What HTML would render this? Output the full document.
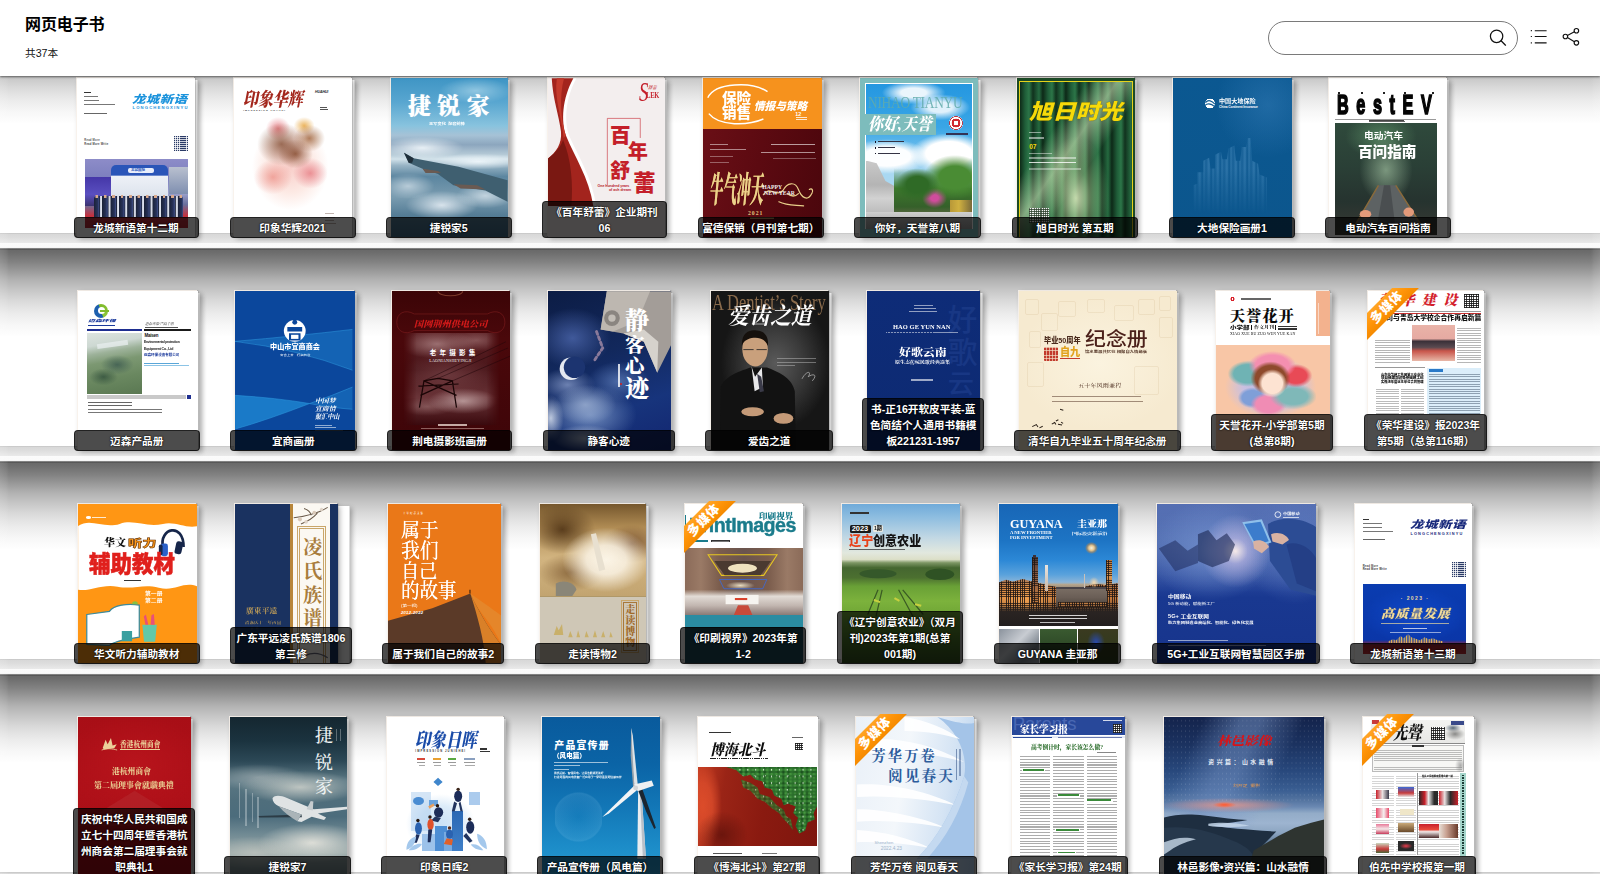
<!DOCTYPE html>
<html lang="zh-CN"><head><meta charset="utf-8"><title>网页电子书</title>
<style>
*{box-sizing:border-box;margin:0;padding:0}
html,body{width:1600px;height:874px;overflow:hidden;background:#fff}
body{position:relative;font-family:"Liberation Sans","Noto Sans CJK SC",sans-serif;}
#shelf{position:absolute;left:0;top:0;width:1600px;height:874px;
 background-image:
  linear-gradient(to right,rgba(255,255,255,.14) 0,rgba(255,255,255,.07) 6px,rgba(255,255,255,0) 9px,rgba(255,255,255,0) 1591px,rgba(255,255,255,.07) 1594px,rgba(255,255,255,.14) 1600px),
  linear-gradient(to bottom,
   #4a4a4a 0,#6a6a6a 1.2px,#6e6e6e 4px,#828282 13px,#9a9a9a 22px,#b2b2b2 31px,#c6c6c6 41px,#dadada 52px,#ebebeb 64px,#f7f7f7 76px,#ffffff 88px,
   #ffffff 196.6px,#c9c9c9 197.4px,#d8d8d8 198.4px,#dedede 202px,#e9e9e9 206.6px,#fbfbfb 207.4px,#fafafa 211px,#f2f2f2 212px,#555 212.7px,#4a4a4a 213px);
 background-size:1600px 874px,1600px 213px;background-position:0 0,0 36px;background-repeat:no-repeat,repeat-y}
#hdr{position:absolute;left:0;top:0;width:1600px;height:75.5px;background:#fff;box-shadow:0 1px 2px rgba(0,0,0,.55);z-index:5}
#hdr h1{position:absolute;left:25px;top:15px;font-size:16px;line-height:20px;font-weight:700;color:#000;letter-spacing:-.1px}
#hdr .cnt{position:absolute;left:25px;top:46px;font-size:10.67px;line-height:14px;color:#111}
#srch{position:absolute;left:1267.5px;top:20.9px;width:250.3px;height:34.2px;border:1px solid #7a7a7a;border-radius:17.1px;background:#fff}
.ic{position:absolute}
.bk{position:absolute;height:159.8px}
.cv{position:absolute;left:0;top:0;height:159px;overflow:hidden;box-shadow:-1px -1px 0 0 rgba(255,248,240,.8),0 0 0 .5px rgba(0,0,0,.18),2px 2px 5px rgba(0,0,0,.28)}
.pg{position:absolute;top:1.5px;height:157.8px;background:linear-gradient(to right,#b8b8b8 0,#fff 1px,#fff calc(100% - 1px),#bbb 100%);box-shadow:2px 2px 5px rgba(0,0,0,.3)}
.lb{position:absolute;bottom:0;background:rgba(0,0,0,.7);border:1px solid rgba(0,0,0,.55);border-radius:4px;color:#fff;font-weight:700;font-size:10.67px;line-height:16px;padding:1.9px 0 .9px;white-space:nowrap;text-align:center;text-shadow:0 0 2px #000,0 0 1px #000;z-index:3;word-break:break-all;overflow:hidden}
.rbw{position:absolute;left:-1.3px;top:-2.8px;width:54px;height:54px;overflow:hidden;z-index:2}
.rb{position:absolute;left:-25.3px;top:10.2px;width:90px;height:18.9px;background:linear-gradient(#ffa526,#ff9408 55%,#f58a00);transform:rotate(-45deg);color:#fff;font-size:12.8px;line-height:19.4px;text-align:center;font-weight:900;font-family:"Liberation Sans","Noto Sans CJK SC",sans-serif;letter-spacing:.4px;text-indent:1px}
.a{position:absolute}
.t{position:absolute;white-space:nowrap;line-height:1}
.sf{font-family:"Liberation Serif","Noto Serif CJK SC",serif}
</style></head>
<body>
<div id="shelf"></div>
<div id="hdr"><h1>网页电子书</h1><div class="cnt">共37本</div>
<div id="srch"><svg class="ic" style="left:218.2px;top:5.3px" width="22" height="22" viewBox="0 0 22 22" fill="none" stroke="#111" stroke-width="1.25" stroke-linecap="round"><circle cx="9.6" cy="9.3" r="6.2"/><path d="M14.1 13.8 L18.5 18.2"/></svg></div>
<svg class="ic" style="left:1528px;top:26px" width="22" height="22" viewBox="0 0 22 22" fill="none" stroke="#111" stroke-width="1.15" stroke-linecap="butt"><path d="M6.8 4.7H18.6M6.8 10.5H18.6M6.8 16.8H18.6"/><path d="M2.8 4.7h1.1M2.8 10.5h1.1M2.8 16.8h1.1" stroke-width="1.2"/></svg>
<svg class="ic" style="left:1560px;top:25px" width="22" height="24" viewBox="0 0 22 24" fill="none" stroke="#111" stroke-width="1.15"><circle cx="16.4" cy="5.7" r="2.25"/><circle cx="5.4" cy="11.5" r="2.25"/><circle cx="16.4" cy="17.8" r="2.25"/><path d="M7.4 10.4 L14.4 6.8M7.4 12.6 L14.4 16.7"/></svg>
</div>
<div class="bk" style="left:77px;top:78px;width:121px"><div class="pg" style="left:117px;width:4px"></div><div class="cv" style="width:118px;background:#fff"><div class="a" style="left:7.3px;top:14.03px;width:6.59px;height:1.45px;background:#333;"></div><div class="a" style="left:7.3px;top:18.36px;width:13.8px;height:0.82px;background:#777;"></div><div class="a" style="left:7.3px;top:22.48px;width:14.41px;height:0.82px;background:#777;"></div><div class="a" style="left:7.3px;top:26.39px;width:30.27px;height:0.82px;background:#777;"></div><div class="a" style="left:7.3px;top:34.83px;width:22.65px;height:1.03px;background:#666;"></div><div class="t " style="left:55.08px;top:15.89px;font-size:10.95px;color:#1b93dc;transform-origin:0 0;transform:scaleX(1.232);font-weight:900;font-style:italic;letter-spacing:.3px">龙城新语</div><div class="t " style="left:55.49px;top:27.57px;font-size:4.19px;color:#1b93dc;font-weight:700;letter-spacing:1.15px">LONGCHENGXINYU</div><div class="a" style="left:96.88px;top:58.31px;width:14.21px;height:14.41px;background:#2a3a66;background-image:repeating-linear-gradient(0deg,rgba(255,255,255,.0) 0,rgba(255,255,255,0) 1.2px,rgba(255,255,255,.75) 1.2px,rgba(255,255,255,.75) 2px),repeating-linear-gradient(90deg,rgba(255,255,255,0) 0,rgba(255,255,255,0) 1.3px,rgba(255,255,255,.8) 1.3px,rgba(255,255,255,.8) 2.1px);"></div><div class="t " style="left:7.3px;top:61.79px;font-size:2.7px;color:#555;font-weight:700;letter-spacing:.2px">Read More</div><div class="t " style="left:7.3px;top:65.5px;font-size:2.68px;color:#444;font-weight:700;letter-spacing:.2px">Read More Write</div><div class="a" style="left:7.71px;top:80.55px;width:103.38px;height:68.99px;background:linear-gradient(to bottom,#8d8cc8 0,#7c7fbe 28%,#9aa0cc 50%,#6a6f9c 66%,#c23240 82%,#b82a36 100%);"></div><div class="a" style="left:7.71px;top:99.08px;width:26.77px;height:28.83px;background:linear-gradient(to bottom,#4537a8,#5a4fc0 60%,#3b3370);"></div><div class="a" style="left:92.14px;top:88.79px;width:18.95px;height:26.77px;background:linear-gradient(to bottom,#b9c0cf,#7f8fb0);"></div><div class="a" style="left:34.48px;top:87.14px;width:56.63px;height:46.95px;background:linear-gradient(to bottom,#2a55b8 0,#2a55b8 22%,#eef1f7 23%,#dfe5ee 60%,#b9c3d6 100%);border-radius:5px 5px 0 0"></div><div class="a" style="left:50.96px;top:90.43px;width:25.74px;height:4.54px;background:#e9eefb;border-radius:2px"></div><div class="t " style="left:54.05px;top:91.05px;font-size:3.51px;color:#2a55b8;font-weight:700">龙城国际</div><div class="a" style="left:16.98px;top:118.03px;width:89.17px;height:20.59px;background:repeating-linear-gradient(90deg,#1b2238 0,#27325a 3.6px,#3c4a80 4.8px,#1b2238 5.8px,#c9cede 6.4px,#dfe3ee 7.8px,#1b2238 8.4px);border-radius:3px 3px 0 0"></div><div class="a" style="left:16.98px;top:116.79px;width:89.17px;height:3.3px;background:repeating-linear-gradient(90deg,rgba(0,0,0,0) 0,rgba(0,0,0,0) 1.4px,#d9a98c 1.6px,#d9a98c 4px,rgba(0,0,0,0) 4.2px,rgba(0,0,0,0) 8.4px);"></div></div><div class="lb" style="left:-3.5px;width:125.0px">龙城新语第十二期</div></div>
<div class="bk" style="left:234px;top:78px;width:121px"><div class="pg" style="left:117px;width:4px"></div><div class="cv" style="width:118px;background:#fff"><div class="t sf" style="left:8.87px;top:11.94px;font-size:19.06px;color:#a3261c;transform-origin:0 0;transform:scaleX(0.783);font-weight:900;font-style:italic">印象华辉</div><div class="t " style="left:9.28px;top:31.78px;font-size:2.38px;color:#333;font-weight:700;letter-spacing:1.05px">IMPRESSION HUAHUI</div><div class="t " style="left:80.94px;top:12.64px;font-size:3.58px;color:#1a1a2a;font-weight:700;font-style:italic;letter-spacing:-.1px">HUAHUI</div><div class="a" style="left:85.88px;top:28.66px;width:7.42px;height:1.03px;background:#555;"></div><div class="a" style="left:85.88px;top:30.71px;width:7.83px;height:1.03px;background:#555;"></div><div class="a" style="left:11.34px;top:39.36px;width:86.49px;height:96.79px;background:radial-gradient(ellipse 28% 22% at 42% 28%,rgba(120,62,34,0.74),rgba(120,62,34,0) 100%),radial-gradient(ellipse 20% 15% at 58% 38%,rgba(130,70,40,0.78),rgba(130,70,40,0) 100%),radial-gradient(ellipse 18% 14% at 74% 22%,rgba(150,84,40,0.74),rgba(150,84,40,0) 100%),radial-gradient(ellipse 12% 9% at 68% 9%,rgba(230,160,50,0.78),rgba(230,160,50,0) 100%),radial-gradient(ellipse 14% 12% at 38% 12%,rgba(225,90,100,0.70),rgba(225,90,100,0) 100%),radial-gradient(ellipse 20% 16% at 75% 58%,rgba(225,95,105,0.64),rgba(225,95,105,0) 100%),radial-gradient(ellipse 22% 18% at 32% 62%,rgba(232,120,110,0.60),rgba(232,120,110,0) 100%),radial-gradient(ellipse 44% 44% at 52% 52%,rgba(247,196,190,0.83),rgba(250,215,205,0.52) 60%,rgba(255,255,255,0) 100%);"></div><div class="a" style="left:90.62px;top:135.12px;width:9.27px;height:1.24px;background:rgba(120,90,80,.45);"></div><div class="a" style="left:90.62px;top:138.62px;width:10.3px;height:1.24px;background:rgba(120,90,80,.45);"></div><div class="a" style="left:90.62px;top:141.92px;width:9.27px;height:1.23px;background:rgba(120,90,80,.45);"></div><div class="a" style="left:90.62px;top:144.8px;width:11.33px;height:1.24px;background:rgba(120,90,80,.45);"></div></div><div class="lb" style="left:-4.5px;width:126.0px">印象华辉2021</div></div>
<div class="bk" style="left:391px;top:78px;width:119px"><div class="pg" style="left:116px;width:3px"></div><div class="cv" style="width:117px;background:#5fa3c4"><div class="a" style="left:-0.41px;top:0.24px;width:121.5px;height:158.98px;background:radial-gradient(ellipse 34% 7% at 26% 44%,rgba(240,246,250,.9),rgba(240,246,250,0) 100%),radial-gradient(ellipse 40% 5% at 72% 52.5%,rgba(238,246,250,.95),rgba(238,246,250,0) 100%),radial-gradient(ellipse 30% 9% at 42% 80%,rgba(235,242,248,.85),rgba(235,242,248,0) 100%),radial-gradient(ellipse 24% 8% at 78% 74%,rgba(225,235,242,.7),rgba(225,235,242,0) 100%),radial-gradient(ellipse 22% 8% at 14% 68%,rgba(225,235,242,.65),rgba(225,235,242,0) 100%),radial-gradient(ellipse 30% 8% at 70% 8%,rgba(190,225,240,.6),rgba(190,225,240,0) 100%),linear-gradient(to bottom,#3f95c4 0,#58a6d0 15%,#88c3de 30%,#a6c2d6 36%,#8ca6be 42%,#b4c9d6 48%,#d2e2ea 51%,#98b4c5 55%,#5c86a0 62%,#7a9cb0 75%,#557d96 86%,#3f6a86 100%);"></div><svg class="a" style="left:0;top:0;overflow:visible;" width="170" height="160" viewBox="102.0 38.8 825.5 777.0"><path d="M165 402 L212 428 L430 470 L668 535 L668 640 L560 585 L470 570 L405 560 L330 505 L255 480 L190 452 Z" fill="#3f5f70"/><path d="M165 402 L212 428 L205 450 L188 452 Z" fill="#1f2f3a"/><path d="M255 480 L330 490 L345 500 L270 500Z M405 555 L520 560 L560 580 L440 575Z" fill="#6a5a52"/></svg><div class="t sf" style="left:17.1px;top:17.58px;font-size:22.79px;color:#fff;font-weight:900;letter-spacing:6.5px;text-shadow:0 0 1px rgba(255,255,255,.6)">捷锐家</div><div class="t " style="left:38.31px;top:44.72px;font-size:3.5px;color:#fff;transform-origin:0 0;transform:scaleX(1.203);font-weight:700">王军变化&nbsp;&nbsp;配套前锋</div></div><div class="lb" style="left:-5px;width:125.5px">捷锐家5</div></div>
<div class="bk" style="left:547.5px;top:78px;width:119.0px"><div class="pg" style="left:116.0px;width:3px"></div><div class="cv" style="width:117.0px;background:#f3eeee"><svg class="a" style="left:0;top:0;overflow:visible;" width="170" height="160" viewBox="861.9 38.8 825.5 777.0"><path d="M880 40 L1000 40 C945 140 940 250 965 320 C1010 420 1075 520 1096 660 L862 660 L862 430 C900 400 930 360 925 300 C915 220 885 140 880 40 Z" fill="#fff"/><path d="M880 40 L985 40 C930 140 925 250 950 320 C990 420 1060 520 1082 660 L862 660 L862 430 C900 400 930 360 925 300 C915 220 885 140 880 40 Z" fill="#a3241d"/><path d="M862 430 C900 400 925 370 935 340 C975 430 985 560 975 660 L862 660Z" fill="#7a1812"/><path d="M905 40 C890 130 930 240 938 330 L948 318 C925 240 915 130 940 40Z" fill="#c43a2c"/><path d="M1150 560 L1150 235 L1310 235 L1310 330" fill="none" stroke="#c8303a" stroke-width="3"/></svg><div class="t " style="left:62.41px;top:48.01px;font-size:20.6px;color:#c41f2a;font-weight:900">百</div><div class="t " style="left:80.33px;top:64.08px;font-size:20.15px;color:#c41f2a;font-weight:900">年</div><div class="t " style="left:62.41px;top:82.61px;font-size:20.16px;color:#c41f2a;font-weight:900">舒</div><div class="t " style="left:85.68px;top:94.97px;font-size:22.34px;color:#c41f2a;font-weight:900">蕾</div><div class="t " style="left:50.05px;top:107.37px;font-size:3.58px;color:#b8202a;font-weight:700;letter-spacing:-.05px">One hundred years</div><div class="t " style="left:61.38px;top:111.28px;font-size:3.58px;color:#b8202a;font-weight:700">of ash dream</div><div class="t sf" style="left:91.86px;top:0.8px;font-size:26.62px;color:#c41f2a;font-style:italic;transform-origin:0 0;transform:scaleX(.7)">S</div><div class="t sf" style="left:98.86px;top:12.7px;font-size:8.55px;color:#c41f2a;font-weight:700;letter-spacing:-.2px;transform-origin:0 0;transform:scaleX(.75)">LEK</div><div class="t sf" style="left:100.51px;top:8.15px;font-size:4.38px;color:#c41f2a;font-weight:700;font-style:italic">舒蕾</div></div><div class="lb" style="left:-5.5px;width:125px">《百年舒蕾》企业期刊<br>06</div></div>
<div class="bk" style="left:703px;top:78px;width:120.5px"><div class="pg" style="left:117.5px;width:3px"></div><div class="cv" style="width:118.5px;background:#5c0a10"><div class="a" style="left:-2.41px;top:-1.82px;width:123.56px;height:52.72px;background:#f6921d;"></div><div class="a" style="left:-2.41px;top:50.9px;width:123.56px;height:107.9px;background:linear-gradient(100deg,#6a0f16 0,#5c0a11 45%,#4a060c 100%);"></div><svg class="a" style="left:0;top:0;overflow:visible;" width="170" height="160" viewBox="111.7 38.8 825.5 777.0"><path d="M135 135 C170 60 350 55 425 105" fill="none" stroke="#fff" stroke-width="7"/><path d="M140 212 C190 275 330 270 405 238" fill="none" stroke="#fff" stroke-width="7"/><path d="M405 605 C430 560 470 620 500 585 C520 545 560 540 575 580 C590 620 620 640 640 600 C650 585 640 570 628 580 M480 640 C520 660 560 655 600 660 M520 600 C540 615 560 615 575 600" fill="none" stroke="#e8cf8a" stroke-width="6" stroke-linecap="round"/></svg><div class="t " style="left:19.22px;top:13.0px;font-size:14.02px;color:#fff;transform-origin:0 0;transform:scaleX(1.043);font-weight:900">保险</div><div class="t " style="left:19.22px;top:27.83px;font-size:14.46px;color:#fff;transform-origin:0 0;transform:scaleX(1.011);font-weight:900">销售</div><div class="t " style="left:51.14px;top:22.89px;font-size:10.96px;color:#fff;transform-origin:0 0;transform:scaleX(0.97);font-weight:900;font-style:italic">情报与策略</div><div class="t " style="left:92.32px;top:33.56px;font-size:5.38px;color:#fff;font-weight:700">12</div><div class="a" style="left:92.73px;top:39.36px;width:10.92px;height:1.03px;background:rgba(255,255,255,.8);"></div><div class="a" style="left:92.73px;top:41.42px;width:11.54px;height:1.03px;background:rgba(255,255,255,.8);"></div><div class="a" style="left:6.86px;top:65.72px;width:18.53px;height:1.24px;background:rgba(255,255,255,.5);"></div><div class="a" style="left:6.86px;top:70.67px;width:36.04px;height:1.23px;background:rgba(255,255,255,.5);"></div><div class="a" style="left:6.86px;top:78.08px;width:23.27px;height:1.03px;background:rgba(255,255,255,.35);"></div><div class="a" style="left:6.86px;top:84.26px;width:19.15px;height:1.03px;background:rgba(255,255,255,.35);"></div><div class="a" style="left:67.61px;top:65.52px;width:44.89px;height:1.44px;background:rgba(255,255,255,.6);"></div><div class="a" style="left:57.72px;top:73.75px;width:54.78px;height:1.45px;background:rgba(255,255,255,.55);"></div><div class="a" style="left:70.08px;top:79.93px;width:42.83px;height:1.24px;background:rgba(255,255,255,.3);"></div><div class="t sf" style="left:5.83px;top:95.26px;font-size:35.49px;color:#ecd18c;transform-origin:0 0;transform:scaleX(0.38);font-weight:900;font-style:italic;text-shadow:0 0 1px #caa24a">牛气冲天</div><div class="t sf" style="left:59.37px;top:106.7px;font-size:5.71px;color:#eee;font-weight:700">HAPPY</div><div class="t sf" style="left:61.02px;top:113.29px;font-size:5.71px;color:#eee;font-weight:700">NEW YEAR</div><div class="t sf" style="left:44.96px;top:133.06px;font-size:5.71px;color:#e0c27a;font-weight:700;letter-spacing:1px">2021</div><div class="a" style="left:47.02px;top:139.45px;width:23.68px;height:1.64px;background:rgba(224,194,122,.7);"></div></div><div class="lb" style="left:-5.5px;width:126.5px">富德保销（月刊第七期）</div></div>
<div class="bk" style="left:860px;top:78px;width:121px"><div class="pg" style="left:117px;width:4px"></div><div class="cv" style="width:118px;background:#7dbcbc"><div class="a" style="left:4.93px;top:4.77px;width:108.32px;height:145.8px;background:#fff;"></div><div class="a" style="left:5.96px;top:5.8px;width:106.26px;height:144.77px;background:radial-gradient(ellipse 36% 14% at 78% 48%,#fff 60%,rgba(255,255,255,0) 100%),radial-gradient(ellipse 40% 12% at 20% 50%,rgba(255,255,255,.98) 55%,rgba(255,255,255,0) 100%),radial-gradient(ellipse 30% 8% at 45% 6%,rgba(255,255,255,.9) 40%,rgba(255,255,255,0) 100%),radial-gradient(ellipse 28% 9% at 70% 16%,rgba(255,255,255,.85) 40%,rgba(255,255,255,0) 100%),linear-gradient(to bottom,#2497e0 0,#3aa6e6 30%,#7cc4ee 50%,#a9d8f2 60%);"></div><div class="t sf" style="left:7.81px;top:17.45px;font-size:16.48px;color:rgba(96,170,170,.85);transform-origin:0 0;transform:scaleX(0.811);letter-spacing:-.3px">NIHAO TIANYU</div><div class="a" style="left:5.34px;top:36.28px;width:70.43px;height:20.79px;background:#7dbcbc;"></div><div class="t sf" style="left:8.43px;top:38.06px;font-size:17.09px;color:#fff;transform-origin:0 0;transform:scaleX(0.877);font-weight:900;font-style:italic">你好,天誉</div><div class="a" style="left:89.36px;top:37.72px;width:13.59px;height:14.0px;background:radial-gradient(circle,#fff 0,#fff 22%,#d02a30 24%,#d02a30 44%,#fff 46%,#fff 60%,#d02a30 62%,#d02a30 68%,#fff 70%);border-radius:50%"></div><div class="a" style="left:85.65px;top:55.43px;width:22.65px;height:1.23px;background:#335;"></div><div class="a" style="left:14.6px;top:63.05px;width:1.65px;height:1.64px;background:#112;"></div><div class="a" style="left:18.11px;top:63.05px;width:26.35px;height:1.44px;background:#334;"></div><div class="a" style="left:14.6px;top:69.02px;width:1.65px;height:1.65px;background:#112;"></div><div class="a" style="left:18.11px;top:69.02px;width:16.47px;height:1.44px;background:#334;"></div><div class="a" style="left:14.6px;top:74.58px;width:1.65px;height:1.65px;background:#112;"></div><div class="a" style="left:18.11px;top:74.58px;width:22.24px;height:1.44px;background:#334;"></div><div class="a" style="left:5.96px;top:82.61px;width:48.8px;height:67.96px;background:linear-gradient(to bottom,#c9c9c9 0,#b4b4b4 35%,#d2d2d2 55%,#bdbdbd 75%,#a9a9a9 100%);clip-path:polygon(0 0,22% 4%,40% 30%,70% 42%,100% 48%,100% 100%,0 100%)"></div><div class="a" style="left:34.17px;top:77.46px;width:78.05px;height:73.11px;background:radial-gradient(ellipse 28% 22% at 30% 40%,#2f6a26 50%,rgba(47,106,38,0) 100%),radial-gradient(ellipse 40% 30% at 78% 30%,#4a8c34 50%,rgba(74,140,52,0) 100%),radial-gradient(ellipse 16% 14% at 52% 58%,#d04c9c 30%,rgba(208,76,156,0) 100%),linear-gradient(to bottom,rgba(60,120,44,0) 0,rgba(60,120,44,.0) 18%,#3c782c 45%,#35602a 70%,#6a6a4c 85%,#8a8a78 100%);"></div><div class="a" style="left:89.77px;top:121.74px;width:22.45px;height:13.38px;background:linear-gradient(90deg,#b89838,#d0b040 40%,#7a6a3a);"></div><div class="a" style="left:5.96px;top:134.09px;width:106.26px;height:16.48px;background:linear-gradient(to bottom,#cfcfcf,#9c9c9c);"></div></div><div class="lb" style="left:-6px;width:127px">你好，天誉第八期</div></div>
<div class="bk" style="left:1016.5px;top:78px;width:120.5px"><div class="pg" style="left:117.5px;width:3px"></div><div class="cv" style="width:118.5px;background:#1c4a26"><div class="a" style="left:3.98px;top:3.94px;width:111.61px;height:154.86px;background:radial-gradient(ellipse 30% 40% at 50% 75%,rgba(222,236,190,.85) 0,rgba(190,220,160,.4) 45%,rgba(190,220,160,0) 100%),linear-gradient(125deg,rgba(0,0,0,0) 30%,rgba(215,235,190,.55) 44%,rgba(215,235,190,.0) 58%),repeating-linear-gradient(90deg,#0e2a18 0,#1f5c38 5px,#2c7648 9px,#11321e 13px,#256a40 19px,#0c2616 23px),#1f5c38;outline:1px solid #e6d21a"></div><div class="t " style="left:12.63px;top:22.89px;font-size:21.03px;color:#f6da0a;transform-origin:0 0;transform:scaleX(1.114);font-weight:900;font-style:italic;text-shadow:0 0 1px #5a4a00">旭日时光</div><div class="a" style="left:12.63px;top:53.78px;width:12.35px;height:1.65px;background:rgba(255,255,255,.5);"></div><div class="a" style="left:12.63px;top:58.93px;width:14.82px;height:1.64px;background:rgba(255,255,255,.5);"></div><div class="t " style="left:12.63px;top:65.5px;font-size:6.57px;color:#f6da0a;font-weight:700">07</div><div class="a" style="left:12.63px;top:74.78px;width:22.65px;height:1.24px;background:rgba(255,255,255,.45);"></div><div class="a" style="left:12.63px;top:79.31px;width:47.36px;height:1.24px;background:rgba(255,255,255,.45);"></div><div class="a" style="left:12.63px;top:84.05px;width:47.36px;height:0.82px;background:rgba(255,255,255,.8);"></div><div class="a" style="left:12.63px;top:90.43px;width:51.48px;height:1.65px;background:rgba(255,255,255,.35);"></div><div class="a" style="left:12.63px;top:129.56px;width:19.97px;height:15.24px;background:#f2f2f2;background-image:repeating-linear-gradient(0deg,rgba(40,60,40,.8) 0,rgba(40,60,40,.8) 1px,rgba(0,0,0,0) 1px,rgba(0,0,0,0) 2.2px),repeating-linear-gradient(90deg,rgba(40,60,40,.7) 0,rgba(40,60,40,.7) 1.1px,rgba(0,0,0,0) 1.1px,rgba(0,0,0,0) 2.3px)"></div></div><div class="lb" style="left:-4.5px;width:126px">旭日时光 第五期</div></div>
<div class="bk" style="left:1173px;top:78px;width:120.5px"><div class="pg" style="left:117.5px;width:3px"></div><div class="cv" style="width:118.5px;background:#0f5c94"><div class="a" style="left:-1.78px;top:-1.82px;width:123.56px;height:160.62px;background:radial-gradient(circle at 78% 18%,rgba(70,140,200,.35) 0,rgba(70,140,200,0) 32%),linear-gradient(to bottom,#0b5891,#0c568d);"></div><div class="a" style="left:19.84px;top:59.96px;width:74.14px;height:76.19px;background:repeating-linear-gradient(90deg,rgba(120,180,225,.0) 0,rgba(120,180,225,.30) 2px,rgba(120,180,225,.10) 4px,rgba(120,180,225,.34) 7px,rgba(120,180,225,.05) 9px);clip-path:polygon(0 62%,6% 60%,6% 45%,14% 45%,14% 30%,22% 26%,24% 40%,30% 40%,30% 22%,38% 18%,40% 28%,46% 28%,48% 14%,56% 10%,58% 30%,64% 30%,66% 12%,72% 12%,74% 0,78% 0,80% 30%,88% 34%,90% 48%,100% 52%,100% 100%,0 100%);-webkit-mask-image:linear-gradient(to bottom,#000 40%,rgba(0,0,0,0) 100%)"></div><div class="a" style="left:31.17px;top:19.59px;width:11.94px;height:11.54px;background:radial-gradient(circle,#fff 0,#fff 58%,rgba(255,255,255,0) 62%);"></div><svg class="a" style="left:0;top:0;overflow:visible;" width="170" height="160" viewBox="888.6 38.8 825.5 777.0"><path d="M1046 158 C1060 142 1078 150 1092 166 M1044 172 C1060 156 1078 166 1094 180" fill="none" stroke="#0f5c94" stroke-width="6"/></svg><div class="t " style="left:46.0px;top:21.04px;font-size:5.47px;color:#fff;transform-origin:0 0;transform:scaleX(1.117);font-weight:700">中国大地保险</div><div class="t " style="left:46.0px;top:27.71px;font-size:3.29px;color:#fff;font-weight:700;letter-spacing:-.12px">China Continent Insurance</div></div><div class="lb" style="left:-4px;width:126px">大地保险画册1</div></div>
<div class="bk" style="left:1329px;top:78px;width:120px"><div class="pg" style="left:117px;width:3px"></div><div class="cv" style="width:118px;background:#fff"><div class="t " style="left:7.63px;top:13.3px;font-size:27.75px;color:#050505;font-weight:700;letter-spacing:13px;-webkit-text-stroke:1.7px #050505;transform-origin:0 0;transform:scaleX(.585)">BestEV</div><div class="a" style="left:9.28px;top:14.24px;width:2.06px;height:2.06px;background:#222;"></div><div class="a" style="left:31.72px;top:14.24px;width:2.06px;height:2.06px;background:#222;"></div><div class="a" style="left:53.97px;top:14.24px;width:2.05px;height:2.06px;background:#222;"></div><div class="a" style="left:74.56px;top:14.24px;width:2.06px;height:2.06px;background:#222;"></div><div class="a" style="left:102.77px;top:14.24px;width:2.06px;height:2.06px;background:#222;"></div><div class="a" style="left:6.19px;top:40.81px;width:100.7px;height:0.61px;background:#999;"></div><div class="a" style="left:39.55px;top:42.04px;width:35.01px;height:0.82px;background:#444;"></div><div class="a" style="left:39.55px;top:43.48px;width:36.24px;height:0.83px;background:#666;"></div><div class="a" style="left:6.19px;top:45.13px;width:101.73px;height:111.61px;background:radial-gradient(ellipse 26% 30% at 50% 42%,rgba(150,180,150,.75) 0,rgba(150,180,150,0) 100%),radial-gradient(ellipse 35% 20% at 45% 12%,rgba(90,140,100,.8) 0,rgba(90,140,100,0) 100%),linear-gradient(to bottom,#2f4a3c 0,#2a3f36 40%,#26332f 70%,#3a3a34 100%);"></div><svg class="a" style="left:0;top:0;overflow:visible;" width="170" height="160" viewBox="237.9 38.8 825.5 777.0"><path d="M478 560 L562 560 L690 760 L360 760 Z" fill="#5d6263"/><path d="M505 560 L535 560 L560 760 L470 760 Z" fill="#4a4e50"/><path d="M478 560 L360 760 M562 560 L690 760" stroke="#8a6a3a" stroke-width="7" fill="none"/><ellipse cx="415" cy="700" rx="28" ry="20" fill="#e39a7a"/><ellipse cx="625" cy="690" rx="26" ry="22" fill="#e39a7a"/></svg><div class="t " style="left:35.43px;top:53.57px;font-size:8.99px;color:#fff;transform-origin:0 0;transform:scaleX(1.088);font-weight:700">电动汽车</div><div class="t " style="left:28.84px;top:66.75px;font-size:14.24px;color:#fff;transform-origin:0 0;transform:scaleX(1.027);font-weight:900">百问指南</div></div><div class="lb" style="left:-4px;width:126px">电动汽车百问指南</div></div>
<div class="bk" style="left:78px;top:291px;width:121.5px"><div class="pg" style="left:118.5px;width:3px"></div><div class="cv" style="width:119.5px;background:#fff"><div class="a" style="left:15.98px;top:12.68px;width:14.41px;height:14.42px;background:conic-gradient(from 200deg,#1d5fae 0,#1d5fae 38%,#7fba2a 40%,#8cc63a 88%,#1d5fae 90%);border-radius:50%"></div><div class="a" style="left:19.69px;top:16.39px;width:7.0px;height:7.0px;background:#fff;border-radius:50%"></div><div class="a" style="left:22.36px;top:19.07px;width:8.24px;height:2.06px;background:#7fba2a;"></div><div class="t " style="left:9.59px;top:29.36px;font-size:3.72px;color:#1b3a9c;transform-origin:0 0;transform:scaleX(1.855);font-weight:900;font-style:italic">迈森环保</div><div class="a" style="left:9.59px;top:34.3px;width:27.6px;height:1.03px;background:#1b3a9c;"></div><div class="a" style="left:8.77px;top:38.01px;width:55.19px;height:1.85px;background:#1e2e90;"></div><div class="a" style="left:66.43px;top:38.01px;width:46.95px;height:1.85px;background:#1a1a1a;"></div><div class="t sf" style="left:66.84px;top:31.9px;font-size:3.51px;color:#222;transform-origin:0 0;transform:scaleX(0.997);font-style:italic">迈森环保·产品手册</div><div class="a" style="left:66.84px;top:35.95px;width:33.57px;height:0.62px;background:#555;"></div><div class="a" style="left:8.77px;top:41.51px;width:55.19px;height:61.16px;background:radial-gradient(ellipse 30% 16% at 55% 52%,rgba(60,90,80,.8),rgba(60,90,80,0)),radial-gradient(ellipse 26% 14% at 30% 72%,rgba(50,80,60,.8),rgba(50,80,60,0)),linear-gradient(170deg,#dde4e0 0,#cdd8d2 20%,#9db29a 32%,#7c9872 46%,#6a8860 70%,#5a7852 100%);"></div><div class="a" style="left:19.07px;top:50.78px;width:30.89px;height:4.53px;background:rgba(230,236,236,.8);transform:rotate(-8deg)"></div><div class="t " style="left:66.43px;top:43.47px;font-size:4.48px;color:#111;font-weight:700;letter-spacing:-.2px">Maisen</div><div class="t " style="left:66.43px;top:49.49px;font-size:4.17px;color:#111;font-weight:700;letter-spacing:-.25px;transform-origin:0 0;transform:scaleX(.8)">Environmental protection</div><div class="t " style="left:66.43px;top:55.67px;font-size:4.17px;color:#111;font-weight:700;letter-spacing:-.2px;transform-origin:0 0;transform:scaleX(.85)">Equipment Co., Ltd</div><div class="t " style="left:66.43px;top:63.14px;font-size:3.72px;color:#1b3a9c;transform-origin:0 0;transform:scaleX(0.952);font-weight:700">迈森环保设备有限公司</div><div class="a" style="left:66.43px;top:71.78px;width:35.01px;height:1.45px;background:#5aa6d8;"></div><div class="a" style="left:66.43px;top:74.46px;width:44.28px;height:0.83px;background:#8cc4e6;"></div><div class="a" style="left:8.77px;top:104.32px;width:98.85px;height:3.5px;background:#c9c9c9;"></div><div class="a" style="left:108.65px;top:104.32px;width:4.73px;height:3.5px;background:#1e2e90;"></div><div class="a" style="left:9.8px;top:110.71px;width:44.69px;height:1.02px;background:#666;"></div><div class="a" style="left:9.8px;top:113.79px;width:44.69px;height:1.03px;background:#666;"></div><div class="a" style="left:9.8px;top:117.91px;width:74.14px;height:0.83px;background:#777;"></div><div class="a" style="left:9.8px;top:121.0px;width:74.55px;height:0.83px;background:#777;"></div></div><div class="lb" style="left:-4.5px;width:126.5px">迈森产品册</div></div>
<div class="bk" style="left:235px;top:291px;width:121.5px"><div class="pg" style="left:118.5px;width:3px"></div><div class="cv" style="width:119.5px;background:#0b479c"><svg class="a" style="left:0;top:0;overflow:visible;" width="170" height="160" viewBox="849.8 53.4 825.5 777.0"><path d="M850 298 Q1150 272 1420 240 L1420 438 Q1150 335 850 298 Z" fill="#1463b4"/><path d="M850 560 Q1050 572 1212 600 Q1000 682 850 724 Z" fill="#1a7ac8"/><path d="M1212 600 Q1320 562 1420 520 L1420 628 Q1300 618 1212 600Z" fill="#1463b4"/><path d="M850 298 Q1150 272 1420 240 M850 298 Q1150 335 1420 438 M850 560 Q1050 572 1212 600 Q1300 618 1420 628 M850 724 Q1000 682 1212 600 Q1320 562 1420 520" fill="none" stroke="#2f9be0" stroke-width="2.5"/><circle cx="1140" cy="247" r="53" fill="#fff"/><circle cx="1140" cy="205" r="12" fill="#0b479c"/><path d="M1104 228 h72 v22 h-72z M1112 258 h56 v36 h-56z" fill="#0b479c"/><path d="M1122 266 h36 v20 h-36z" fill="#fff"/></svg><div class="t " style="left:35.05px;top:52.63px;font-size:6.8px;color:#fff;transform-origin:0 0;transform:scaleX(1.051);font-weight:900">中山市宜商商会</div><div class="t " style="left:44.52px;top:62.52px;font-size:2.19px;color:#fff;transform-origin:0 0;transform:scaleX(1.567);">宜言上善 · 行商有道</div><div class="t sf" style="left:80.35px;top:106.92px;font-size:6.57px;color:#fff;transform-origin:0 0;transform:scaleX(1.045);font-weight:700;font-style:italic">中国梦</div><div class="t sf" style="left:80.35px;top:115.16px;font-size:6.57px;color:#fff;transform-origin:0 0;transform:scaleX(1.045);font-weight:700;font-style:italic">宜商情</div><div class="t sf" style="left:80.35px;top:123.41px;font-size:7.01px;color:#fff;transform-origin:0 0;transform:scaleX(0.867);font-weight:700;font-style:italic">聚汇中山</div><div class="a" style="left:80.35px;top:133.56px;width:16.48px;height:1.03px;background:rgba(255,255,255,.55);"></div><div class="a" style="left:80.35px;top:136.45px;width:20.6px;height:1.03px;background:rgba(255,255,255,.55);"></div><div class="a" style="left:80.35px;top:138.92px;width:27.8px;height:1.03px;background:rgba(255,255,255,.55);"></div></div><div class="lb" style="left:-5px;width:126.5px">宜商画册</div></div>
<div class="bk" style="left:392px;top:291px;width:120px"><div class="pg" style="left:117px;width:3px"></div><div class="cv" style="width:118px;background:#3a0508"><div class="a" style="left:-1.41px;top:-2.76px;width:121.5px;height:166.8px;background:linear-gradient(to bottom,#3a0406 0,#4a080b 30%,#3d0508 100%);"></div><div class="a" style="left:10.95px;top:41.51px;width:97.2px;height:92.67px;background:radial-gradient(ellipse 40% 16% at 35% 12%,rgba(200,165,165,.6),rgba(215,180,180,0)),radial-gradient(ellipse 30% 12% at 75% 8%,rgba(190,150,150,.45),rgba(200,160,160,0)),radial-gradient(ellipse 36% 14% at 62% 74%,rgba(215,190,190,.7),rgba(225,200,200,0)),radial-gradient(ellipse 30% 10% at 25% 80%,rgba(180,140,140,.45),rgba(180,140,140,0)),radial-gradient(ellipse 50% 22% at 45% 45%,rgba(130,80,84,.55),rgba(150,95,98,0)),linear-gradient(to bottom,#5a1e22 0,#4a161a 40%,#6a3438 70%,#3a0a0e 100%);-webkit-mask-image:linear-gradient(90deg,rgba(0,0,0,0) 0,#000 14%,#000 86%,rgba(0,0,0,0) 100%)"></div><svg class="a" style="left:0;top:0;overflow:visible;" width="170" height="160" viewBox="106.8 53.4 825.5 777.0"><path d="M240 620 L262 490 L330 478 L400 490 L420 620 M262 490 L420 560 M400 490 L245 560 M235 515 L430 505" fill="none" stroke="#1a0506" stroke-width="6"/><path d="M262 490 L660 300 M330 478 L670 330 M400 490 L680 370" stroke="rgba(30,5,8,.8)" stroke-width="3" fill="none"/><path d="M130 205 C130 160 170 140 215 165 L570 165 C615 140 655 160 655 205 C655 250 615 270 570 245 L215 245 C170 270 130 250 130 205 Z" fill="none" stroke="#7c1c1e" stroke-width="3"/><path d="M330 55 A60 22 0 0 0 450 55" fill="none" stroke="#7c3a2a" stroke-width="5"/></svg><div class="t sf" style="left:22.28px;top:28.72px;font-size:8.77px;color:#d21a1a;transform-origin:0 0;transform:scaleX(1.048);font-weight:900;font-style:italic">国网荆州供电公司</div><div class="t " style="left:37.72px;top:59.22px;font-size:6.57px;color:#fff;font-weight:700;letter-spacing:3.2px">老年摄影集</div><div class="t sf" style="left:37.31px;top:68.37px;font-size:4.11px;color:#eee;letter-spacing:.15px">LAONIANSHEYINGJI</div><div class="a" style="left:45.96px;top:133.15px;width:29.24px;height:1.44px;background:rgba(255,240,230,.7);"></div><div class="a" style="left:29.48px;top:136.65px;width:62.19px;height:1.03px;background:rgba(255,230,220,.4);"></div></div><div class="lb" style="left:-5px;width:125px">荆电摄影班画册</div></div>
<div class="bk" style="left:548px;top:291px;width:125px"><div class="pg" style="left:122px;width:3px"></div><div class="cv" style="width:123px;background:#16306a"><div class="a" style="left:-0.9px;top:-2.76px;width:127.68px;height:166.8px;background:radial-gradient(ellipse 10% 14% at 3% 78%,rgba(205,215,232,.9) 0,rgba(205,215,232,0) 100%),radial-gradient(ellipse 26% 8% at 30% 90%,rgba(190,204,226,.85) 0,rgba(190,204,226,0) 100%),radial-gradient(ellipse 24% 12% at 30% 70%,rgba(150,170,206,.85) 0,rgba(150,170,206,0) 100%),radial-gradient(ellipse 22% 10% at 16% 58%,rgba(130,150,196,.8) 0,rgba(130,150,196,0) 100%),radial-gradient(ellipse 30% 18% at 20% 30%,#40599a 0,rgba(64,89,154,0) 100%),radial-gradient(ellipse 36% 18% at 34% 76%,#6f8abc 0,rgba(111,138,188,0) 100%),radial-gradient(ellipse 24% 12% at 56% 56%,#4c6aa6 0,rgba(76,106,166,0) 100%),linear-gradient(160deg,#0c1c44 0,#12285c 40%,#17347c 70%,#12246e 100%);"></div><svg class="a" style="left:0;top:0;overflow:visible;" width="170" height="160" viewBox="864.4 53.4 825.5 777.0"><path d="M1150 55 L1470 55 L1470 300 L1395 450 L1330 300 L1230 260 L1120 240 Z" fill="#a39d98"/><path d="M1150 55 L1360 55 L1300 200 L1180 250 L1120 240Z" fill="#bdb7b0"/><path d="M1230 260 L1330 300 L1395 450 L1400 300 L1330 240Z" fill="#d6d2cc"/><circle cx="1175" cy="185" r="38" fill="#8a8580"/><circle cx="1175" cy="185" r="18" fill="#c2bdb6"/><circle cx="976" cy="431" r="55" fill="#e4e8f0"/><circle cx="993" cy="424" r="52" fill="#1c3470"/><path d="M1100 250 L1130 330 L1090 390" stroke="#8a7a9a" stroke-width="14" stroke-dasharray="14 14" fill="none" stroke-linecap="round"/></svg><div class="t sf" style="left:76.94px;top:18.31px;font-size:24.1px;color:#fff;font-weight:900">静</div><div class="t sf" style="left:76.94px;top:45.4px;font-size:19.72px;color:#fff;font-weight:900">客</div><div class="t sf" style="left:76.94px;top:66.0px;font-size:19.28px;color:#fff;font-weight:900">心</div><div class="t sf" style="left:76.94px;top:86.27px;font-size:24.1px;color:#fff;font-weight:900">迹</div><div class="a" style="left:70.15px;top:73.02px;width:1.64px;height:23.06px;background:#fff;opacity:.8"></div><div class="a" style="left:71.59px;top:91.97px;width:2.47px;height:2.47px;background:#d02020;border-radius:50%"></div></div><div class="lb" style="left:-5.399999999999977px;width:132.19999999999993px">静客心迹</div></div>
<div class="bk" style="left:710.5px;top:291px;width:121.5px"><div class="pg" style="left:117.5px;width:4px"></div><div class="cv" style="width:118.5px;background:#161616"><div class="a" style="left:-1.67px;top:-2.76px;width:121.5px;height:166.8px;background:radial-gradient(ellipse 45% 40% at 55% 45%,#5a5a5a 0,#3a3a3a 50%,rgba(30,30,30,0) 100%),#161616;"></div><div class="t sf" style="left:1.42px;top:0.16px;font-size:23.77px;color:#8a6b4c;transform-origin:0 0;transform:scaleX(0.694);">A Dentist’s Story</div><div class="t sf" style="left:17.89px;top:14.17px;font-size:23.22px;color:#fff;transform-origin:0 0;transform:scaleX(0.902);font-weight:700;font-style:italic">爱齿之道</div><svg class="a" style="left:0;top:0;overflow:visible;" width="170" height="160" viewBox="148.1 53.4 825.5 777.0"><path d="M190 850 L195 520 C220 460 300 440 340 425 L420 425 C470 445 540 470 555 540 L560 850 Z" fill="#121212"/><ellipse cx="362" cy="335" rx="62" ry="85" fill="#c9a07c"/><path d="M298 320 C295 250 340 240 370 245 C410 245 430 280 424 320 C410 285 380 275 345 282 C320 288 305 300 298 320Z" fill="#15100c"/><path d="M345 420 L362 470 L395 425 L400 520 L360 540 Z" fill="#e8e8ea"/><path d="M372 455 L392 470 L405 540 L385 545Z" fill="#3a3a48"/><ellipse cx="350" cy="640" rx="55" ry="22" fill="#c49a78"/><ellipse cx="500" cy="672" rx="48" ry="26" fill="#c49a78"/><path d="M305 338 h50 m14 0 h50" stroke="#222" stroke-width="4" fill="none"/></svg><div class="a" style="left:66.29px;top:67.25px;width:39.12px;height:1.24px;background:rgba(200,200,200,.45);"></div><div class="a" style="left:66.29px;top:70.55px;width:39.12px;height:1.23px;background:rgba(200,200,200,.45);"></div><div class="a" style="left:66.29px;top:73.84px;width:18.53px;height:1.24px;background:rgba(200,200,200,.45);"></div><svg class="a" style="left:0;top:0;overflow:visible;" width="170" height="160" viewBox="148.1 53.4 825.5 777.0"><path d="M590 480 C610 440 640 440 620 470 C640 455 670 455 640 490" fill="none" stroke="#aaa" stroke-width="4"/></svg></div><div class="lb" style="left:-5.5px;width:128.39999999999998px">爱齿之道</div></div>
<div class="bk" style="left:867px;top:291px;width:116px"><div class="pg" style="left:112px;width:4px"></div><div class="cv" style="width:113px;background:#0e2c78"><div class="a" style="left:-1.66px;top:-2.76px;width:119.44px;height:166.8px;background:linear-gradient(to bottom,#0e2c78,#0d2a72);"></div><div class="t " style="left:80.71px;top:13.71px;font-size:29.57px;color:#183784;font-weight:500">好</div><div class="t " style="left:80.71px;top:46.66px;font-size:29.57px;color:#183784;font-weight:500">歌</div><div class="t " style="left:80.71px;top:79.61px;font-size:26.29px;color:#183784;font-weight:500">云</div><div class="a" style="left:41.58px;top:19.89px;width:28.83px;height:0.41px;background:rgba(255,255,255,.55);"></div><div class="a" style="left:46.73px;top:14.12px;width:19.15px;height:1.03px;background:rgba(255,255,255,.55);"></div><div class="a" style="left:46.73px;top:17.01px;width:22.65px;height:1.03px;background:rgba(255,255,255,.55);"></div><div class="t sf" style="left:26.14px;top:32.9px;font-size:6.65px;color:#fff;transform-origin:0 0;transform:scaleX(0.964);font-weight:700;letter-spacing:.1px">HAO GE YUN NAN</div><div class="a" style="left:19.34px;top:40.69px;width:72.08px;height:1.23px;background:rgba(255,255,255,.5);background-image:repeating-linear-gradient(90deg,rgba(14,44,120,0) 0,rgba(14,44,120,0) 1px,rgba(14,44,120,.9) 1px,rgba(14,44,120,.9) 1.5px)"></div><div class="t sf" style="left:32.32px;top:55.73px;font-size:10.73px;color:#fff;transform-origin:0 0;transform:scaleX(1.113);font-weight:900">好歌云南</div><div class="t sf" style="left:28.2px;top:69.6px;font-size:4.16px;color:#fff;transform-origin:0 0;transform:scaleX(1.201);font-weight:700">原生态传统民歌经典选集</div><div class="a" style="left:44.05px;top:88.05px;width:22.24px;height:1.86px;background:rgba(255,255,255,.6);"></div><div class="a" style="left:112.84px;top:-2.76px;width:2.88px;height:166.8px;background:linear-gradient(90deg,rgba(255,255,255,.25),rgba(255,255,255,.75));"></div></div><div class="lb" style="left:-5px;width:122.39999999999998px">书-正16开软皮平装-蓝<br>色简结个人通用书籍模<br>板221231-1957</div></div>
<div class="bk" style="left:1019px;top:291px;width:160px"><div class="pg" style="left:157px;width:3px"></div><div class="cv" style="width:158px;background:#f6ead0"><div class="a" style="left:-2.23px;top:-2.76px;width:164.75px;height:166.8px;background:radial-gradient(ellipse 50% 40% at 50% 45%,#fbf3df 0,rgba(251,243,223,0) 100%),#f6ead0;"></div><div class="a" style="left:6.01px;top:7.53px;width:14.41px;height:16.48px;background:rgba(200,170,120,.0);border:1px solid rgba(190,160,110,.16);border-radius:2px"></div><div class="a" style="left:22.48px;top:21.95px;width:16.48px;height:18.53px;background:rgba(200,170,120,.0);border:1px solid rgba(190,160,110,.16);border-radius:2px"></div><div class="a" style="left:38.96px;top:9.59px;width:18.53px;height:16.48px;background:rgba(200,170,120,.0);border:1px solid rgba(190,160,110,.16);border-radius:2px"></div><div class="a" style="left:67.79px;top:7.53px;width:18.53px;height:14.42px;background:rgba(200,170,120,.0);border:1px solid rgba(190,160,110,.16);border-radius:2px"></div><div class="a" style="left:94.56px;top:13.71px;width:20.59px;height:16.48px;background:rgba(200,170,120,.0);border:1px solid rgba(190,160,110,.16);border-radius:2px"></div><div class="a" style="left:119.27px;top:7.53px;width:16.47px;height:16.48px;background:rgba(200,170,120,.0);border:1px solid rgba(190,160,110,.16);border-radius:2px"></div><div class="a" style="left:139.86px;top:26.07px;width:14.42px;height:20.59px;background:rgba(200,170,120,.0);border:1px solid rgba(190,160,110,.16);border-radius:2px"></div><div class="a" style="left:10.13px;top:40.48px;width:12.35px;height:16.48px;background:rgba(200,170,120,.0);border:1px solid rgba(190,160,110,.16);border-radius:2px"></div><div class="a" style="left:139.86px;top:5.47px;width:12.36px;height:14.42px;background:rgba(200,170,120,.0);border:1px solid rgba(190,160,110,.16);border-radius:2px"></div><div class="a" style="left:115.15px;top:75.49px;width:24.71px;height:28.83px;background:rgba(200,170,120,.0);border:1px solid rgba(190,160,110,.16);border-radius:2px"></div><div class="a" style="left:8.07px;top:71.37px;width:16.47px;height:24.71px;background:rgba(200,170,120,.0);border:1px solid rgba(190,160,110,.16);border-radius:2px"></div><div class="t " style="left:24.95px;top:45.84px;font-size:7.45px;color:#4a2a1c;transform-origin:0 0;transform:scaleX(0.966);font-weight:900">毕业50周年</div><div class="a" style="left:24.95px;top:55.93px;width:14.21px;height:13.79px;background:#c23a2c;border-radius:1px;background-image:repeating-linear-gradient(0deg,rgba(246,234,208,.0) 0,rgba(246,234,208,0) 2px,rgba(246,234,208,.65) 2px,rgba(246,234,208,.65) 2.8px),repeating-linear-gradient(90deg,rgba(246,234,208,0) 0,rgba(246,234,208,0) 2.2px,rgba(246,234,208,.6) 2.2px,rgba(246,234,208,.6) 3px)"></div><div class="t " style="left:40.6px;top:56.13px;font-size:10.96px;color:#e2a21e;transform-origin:0 0;transform:scaleX(0.921);font-weight:900">自九</div><div class="a" style="left:41.02px;top:67.05px;width:19.77px;height:1.23px;background:#c23a2c;"></div><div class="t " style="left:66.35px;top:38.63px;font-size:19.71px;color:#4b201a;transform-origin:0 0;transform:scaleX(1.062);font-weight:500">纪念册</div><div class="t " style="left:65.73px;top:60.25px;font-size:3.07px;color:#4a2a1c;transform-origin:0 0;transform:scaleX(1.422);font-weight:700">饮水思源共忆往 相聚自九情缘长</div><div class="t sf" style="left:58.52px;top:93.29px;font-size:4.61px;color:#4a2a1c;transform-origin:0 0;transform:scaleX(1.346);">五十年风雨兼程</div><div class="a" style="left:32.78px;top:104.73px;width:89.58px;height:1.44px;background:rgba(74,42,28,.5);"></div><div class="a" style="left:32.78px;top:109.88px;width:91.02px;height:1.44px;background:rgba(74,42,28,.5);"></div><svg class="a" style="left:0;top:0;overflow:visible;" width="170" height="160" viewBox="140.8 53.4 825.5 777.0"><path d="M205 712 l20 -10 l8 12 M240 718 l16 -8 M300 700 l14 -8 l6 10 M320 685 l12 -6 M345 690 l10 6 M340 628 l16 4 M330 700 l20 4" stroke="#2a2018" stroke-width="5" fill="none"/></svg></div><div class="lb" style="left:-5px;width:166.5px">清华自九毕业五十周年纪念册</div></div>
<div class="bk" style="left:1216px;top:291px;width:116px"><div class="pg" style="left:113px;width:3px"></div><div class="cv" style="width:114px;background:#fff"><div class="a" style="left:-1.58px;top:53.87px;width:117.38px;height:110.17px;background:#f8c6a6;"></div><div class="a" style="left:100.35px;top:-0.7px;width:15.45px;height:45.3px;background:#f3b28e;"></div><div class="a" style="left:101.79px;top:11.65px;width:1.65px;height:30.89px;background:rgba(255,255,255,.5);"></div><div class="a" style="left:14.48px;top:5.89px;width:4.94px;height:4.53px;background:radial-gradient(circle,#fff 0,#fff 25%,#d8202a 30%,#d8202a 62%,rgba(255,255,255,0) 66%);"></div><div class="a" style="left:25.19px;top:7.33px;width:29.86px;height:1.23px;background:#666;"></div><div class="t sf" style="left:13.86px;top:17.32px;font-size:15.33px;color:#0a0a0a;font-weight:900;letter-spacing:.9px">天誉花开</div><div class="t " style="left:13.86px;top:34.51px;font-size:4.82px;color:#0a0a0a;transform-origin:0 0;transform:scaleX(1.353);font-weight:900">小学部</div><div class="a" style="left:35.48px;top:34.1px;width:0.83px;height:5.35px;background:#111;"></div><div class="t sf" style="left:37.54px;top:35.0px;font-size:4.17px;color:#111;transform-origin:0 0;transform:scaleX(1.21);font-weight:700">作文月刊</div><div class="a" style="left:59.37px;top:34.1px;width:0.82px;height:5.35px;background:#111;"></div><div class="a" style="left:61.84px;top:34.51px;width:18.95px;height:1.65px;background:#333;"></div><div class="a" style="left:61.84px;top:36.98px;width:18.95px;height:1.65px;background:#333;"></div><div class="t sf" style="left:13.86px;top:41.56px;font-size:3.17px;color:#111;transform-origin:0 0;transform:scaleX(1.22);letter-spacing:.12px">XIAO XUE BU ZUO WEN YUE KAN</div><div class="a" style="left:8.71px;top:60.05px;width:91.64px;height:64.86px;background:radial-gradient(ellipse 16% 22% at 52% 50%,#fde3d2 0,#fde3d2 70%,rgba(253,227,210,0) 100%),radial-gradient(ellipse 22% 26% at 50% 42%,#8e4a2c 0,#8e4a2c 75%,rgba(142,74,44,0) 100%),radial-gradient(ellipse 26% 22% at 52% 22%,#f48fb0 0,#f48fb0 70%,rgba(244,143,176,0) 100%),radial-gradient(ellipse 18% 18% at 78% 38%,#e84a56 0,#e84a56 65%,rgba(232,74,86,0) 100%),radial-gradient(ellipse 22% 20% at 25% 35%,#6fb3b4 0,#6fb3b4 70%,rgba(111,179,180,0) 100%),radial-gradient(ellipse 26% 20% at 75% 70%,#7fb8b8 0,#7fb8b8 60%,rgba(127,184,184,0) 100%),radial-gradient(ellipse 20% 18% at 48% 82%,#f08cb4 0,#f08cb4 70%,rgba(240,140,180,0) 100%),radial-gradient(ellipse 16% 16% at 30% 72%,#7f9fd8 0,#7f9fd8 70%,rgba(127,159,216,0) 100%),radial-gradient(ellipse 50% 48% at 50% 55%,#b9b8de 0,#c9c0e0 60%,rgba(201,192,224,0) 100%);"></div></div><div class="lb" style="left:-5px;width:122px">天誉花开-小学部第5期<br>(总第8期)</div></div>
<div class="bk" style="left:1368px;top:291px;width:118px"><div class="pg" style="left:115px;width:3px"></div><div class="cv" style="width:116px;background:#fff"><div class="t sf" style="left:10.75px;top:2.25px;font-size:14.24px;color:#d3202a;font-weight:900;font-style:italic;letter-spacing:7.2px">荣华建设</div><div class="a" style="left:96.0px;top:3.0px;width:15.24px;height:14.01px;background:#fff;background-image:repeating-linear-gradient(0deg,rgba(20,20,20,.85) 0,rgba(20,20,20,.85) 1px,rgba(0,0,0,0) 1px,rgba(0,0,0,0) 2.1px),repeating-linear-gradient(90deg,rgba(20,20,20,.8) 0,rgba(20,20,20,.8) 1.1px,rgba(0,0,0,0) 1.1px,rgba(0,0,0,0) 2.3px)"></div><div class="a" style="left:7.04px;top:19.89px;width:106.26px;height:1.24px;background:repeating-linear-gradient(0deg,rgba(90,90,90,0.6) 0,rgba(90,90,90,0.6) 0.6px,rgba(90,90,90,0) 0.6px,rgba(90,90,90,0) 1.2px);"></div><div class="a" style="left:7.04px;top:21.54px;width:106.26px;height:0.41px;background:#c33;"></div><div class="t " style="left:-2.02px;top:24.21px;font-size:6.57px;color:#111;transform-origin:0 0;transform:scaleX(1.033);font-weight:900">荣华公司与青岛大学校企合作再启新篇</div><div class="a" style="left:44.11px;top:34.3px;width:43.24px;height:35.42px;background:linear-gradient(to bottom,#e9b3a8 0,#e6aaa2 38%,#3a3038 45%,#5a4a50 62%,#c8544a 72%,#e8b8a8 100%);"></div><div class="a" style="left:7.45px;top:47.69px;width:35.01px;height:24.09px;background:repeating-linear-gradient(0deg,rgba(110,110,110,0.5) 0,rgba(110,110,110,0.5) 0.7px,rgba(110,110,110,0) 0.7px,rgba(110,110,110,0) 1.7px);"></div><div class="a" style="left:89.41px;top:34.72px;width:23.89px;height:37.06px;background:repeating-linear-gradient(0deg,rgba(110,110,110,0.5) 0,rgba(110,110,110,0.5) 0.7px,rgba(110,110,110,0) 0.7px,rgba(110,110,110,0) 1.7px);"></div><div class="a" style="left:7.45px;top:76.31px;width:49.43px;height:0.42px;background:#999;"></div><div class="t " style="left:13.22px;top:82.9px;font-size:3.07px;color:#111;transform-origin:0 0;transform:scaleX(1.068);font-weight:900">山东荣华建工集团第三专业化</div><div class="t " style="left:13.22px;top:86.41px;font-size:3.06px;color:#111;transform-origin:0 0;transform:scaleX(1.161);font-weight:900">项目经理部设备基础施工纪</div><div class="t " style="left:13.22px;top:89.91px;font-size:3.06px;color:#111;transform-origin:0 0;transform:scaleX(1.072);font-weight:900">实推进年度业主单位合同管理</div><div class="a" style="left:8.48px;top:98.14px;width:22.24px;height:25.13px;background:repeating-linear-gradient(0deg,rgba(120,120,120,0.5) 0,rgba(120,120,120,0.5) 0.7px,rgba(120,120,120,0) 0.7px,rgba(120,120,120,0) 1.7px);"></div><div class="a" style="left:33.4px;top:98.14px;width:22.45px;height:25.13px;background:repeating-linear-gradient(0deg,rgba(120,120,120,0.5) 0,rgba(120,120,120,0.5) 0.7px,rgba(120,120,120,0) 0.7px,rgba(120,120,120,0) 1.7px);"></div><div class="a" style="left:58.52px;top:77.14px;width:54.78px;height:46.13px;background:#dbeefa;"></div><div class="a" style="left:61.0px;top:78.37px;width:13.59px;height:2.89px;background:#2a7ac8;"></div><div class="a" style="left:60.58px;top:83.32px;width:51.49px;height:39.95px;background:repeating-linear-gradient(0deg,rgba(90,110,130,0.6) 0,rgba(90,110,130,0.6) 0.7px,rgba(90,110,130,0) 0.7px,rgba(90,110,130,0) 1.7px);"></div></div><div class="rbw"><div class="rb">多媒体</div></div><div class="lb" style="left:-4px;width:123px">《荣华建设》报2023年<br>第5期（总第116期）</div></div>
<div class="bk" style="left:78px;top:504px;width:121px"><div class="pg" style="left:118px;width:3px"></div><div class="cv" style="width:119px;background:#ff9614"><svg class="a" style="left:0;top:0;overflow:visible;" width="170" height="160" viewBox="87.4 53.4 825.5 777.0"><path d="M88 160 C150 120 210 175 290 150 C360 125 420 170 500 150 C560 135 610 175 670 160 L670 455 C600 425 560 480 480 460 C400 440 360 470 280 455 C200 440 150 480 88 470 Z" fill="#fff"/><path d="M500 262 C480 170 600 140 600 262" fill="none" stroke="#16264a" stroke-width="13"/><rect x="490" y="245" width="34" height="62" rx="12" fill="#2a60c8"/><rect x="480" y="250" width="18" height="52" rx="8" fill="#16264a"/><rect x="560" y="235" width="34" height="62" rx="12" fill="#16264a" transform="rotate(12 577 266)"/><path d="M130 590 L240 575 C260 545 330 535 385 545 L385 700 C320 710 260 720 240 740 L130 735 Z" fill="#fff" stroke="#3b8a9c" stroke-width="6"/><path d="M300 670 h50 v50 h-50z" fill="#3aa0a0"/><path d="M350 540 a14 14 0 1 1 28 0z" fill="#8ac040"/><path d="M400 640 h70 l-8 82 h-54z" fill="#62c8a8"/><path d="M415 640 l-8 -40 l10 -10 l12 50z M440 640 l4 -46 l12 -6 l4 52z" fill="#e8507a"/></svg><div class="a" style="left:7.74px;top:12.48px;width:5.15px;height:2.47px;background:#fff;border-radius:50%"></div><div class="a" style="left:13.92px;top:13.09px;width:13.8px;height:1.24px;background:rgba(255,255,255,.8);"></div><div class="t sf" style="left:26.28px;top:33.68px;font-size:10.07px;color:#111;transform-origin:0 0;transform:scaleX(1.094);font-weight:900">华文</div><div class="t " style="left:50.37px;top:34.51px;font-size:9.86px;color:#ff9a1a;transform-origin:0 0;transform:scaleX(1.441);font-weight:900;-webkit-text-stroke:.5px #5a2a00">听力</div><div class="t " style="left:10.83px;top:48.93px;font-size:23.0px;color:#e0201c;transform-origin:0 0;transform:scaleX(0.933);font-weight:900;-webkit-text-stroke:.5px #e0201c">辅助教材</div><div class="a" style="left:45.84px;top:75.7px;width:16.88px;height:1.64px;background:#333;"></div><div class="t " style="left:67.46px;top:87.85px;font-size:4.38px;color:#fff;transform-origin:0 0;transform:scaleX(1.333);font-weight:700">第一册</div><div class="t " style="left:67.46px;top:95.05px;font-size:4.38px;color:#fff;transform-origin:0 0;transform:scaleX(1.333);font-weight:700">第二册</div></div><div class="lb" style="left:-4.5px;width:126.5px">华文听力辅助教材</div></div>
<div class="bk" style="left:235px;top:504px;width:115px"><div class="pg" style="left:102px;width:13px"></div><div class="cv" style="width:103px;background:#fff"><div class="a" style="left:-2.02px;top:-2.76px;width:58.69px;height:166.8px;background:#1a3260;"></div><div class="a" style="left:55.23px;top:-2.76px;width:2.47px;height:166.8px;background:#b8863a;"></div><div class="a" style="left:57.7px;top:-2.76px;width:37.48px;height:166.8px;background:#fbf8f2;"></div><div class="a" style="left:95.18px;top:-2.76px;width:9.89px;height:166.8px;background:#1a3260;"></div><div class="a" style="left:61.82px;top:21.95px;width:29.24px;height:142.09px;background:rgba(0,0,0,0);border:1px solid #c9a66a;border-bottom:none"></div><div class="a" style="left:63.88px;top:24.01px;width:25.12px;height:140.03px;background:rgba(0,0,0,0);border:.6px solid #c9a66a;border-bottom:none"></div><svg class="a" style="left:0;top:0;overflow:visible;" width="170" height="160" viewBox="849.8 53.4 825.5 777.0"><path d="M1300 70 C1260 95 1220 110 1135 120 M1250 98 C1230 120 1200 140 1170 150 M1220 108 C1215 90 1200 80 1185 75" fill="none" stroke="#6a5a4a" stroke-width="5"/><circle cx="1165" cy="128" r="10" fill="#d8c8b8"/><circle cx="1195" cy="140" r="9" fill="#e0d4c8"/><circle cx="1235" cy="95" r="9" fill="#d8c8b8"/><circle cx="1270" cy="80" r="8" fill="#e0d4c8"/><path d="M1190 790 C1230 770 1270 780 1300 800" fill="none" stroke="#6a6a7a" stroke-width="6"/></svg><div class="t sf" style="left:68.0px;top:33.67px;font-size:19.28px;color:#a87c3c;font-weight:700">凌</div><div class="t sf" style="left:68.0px;top:58.38px;font-size:19.28px;color:#a87c3c;font-weight:700">氏</div><div class="t sf" style="left:68.0px;top:82.06px;font-size:19.28px;color:#a87c3c;font-weight:700">族</div><div class="t sf" style="left:68.0px;top:104.71px;font-size:19.28px;color:#a87c3c;font-weight:700">谱</div><div class="t sf" style="left:11.37px;top:103.63px;font-size:6.57px;color:#b89858;transform-origin:0 0;transform:scaleX(1.191);font-weight:700">廣東平遠</div><div class="t sf" style="left:10.34px;top:117.97px;font-size:3.07px;color:#b89858;transform-origin:0 0;transform:scaleX(1.476);font-weight:700">清嘉庆十一年丙寅</div><div class="t sf" style="left:15.49px;top:123.93px;font-size:2.64px;color:#8a7850;">第三修</div></div><div class="lb" style="left:-5px;width:122px">广东平远凌氏族谱1806<br>第三修</div></div>
<div class="bk" style="left:387.5px;top:504px;width:115.5px"><div class="pg" style="left:112.5px;width:3px"></div><div class="cv" style="width:113.5px;background:#ea7818"><svg class="a" style="left:0;top:0;overflow:visible;" width="170" height="160" viewBox="85.0 53.4 825.5 777.0"><path d="M85 620 L300 560 L485 488 C520 560 560 640 640 745 L640 850 L85 850 Z" fill="#5b3a28"/><path d="M485 488 C500 520 520 560 560 610 C590 650 620 700 640 745 L640 600 C590 560 530 520 485 488Z" fill="#e5862a"/><path d="M485 488 C520 560 560 640 640 745 L640 850 L560 850 C560 740 520 600 485 488Z" fill="#d98028"/><path d="M483 470 v18" stroke="#2a1a10" stroke-width="5"/></svg><div class="t sf" style="left:15.45px;top:9.23px;font-size:2.41px;color:#fff;font-weight:700;letter-spacing:1.1px">十年纪念文集</div><div class="t sf" style="left:13.39px;top:17.4px;font-size:19.71px;color:#fff;transform-origin:0 0;transform:scaleX(0.951);font-weight:400;text-shadow:.3px 0 0 #fff">属于</div><div class="t sf" style="left:13.39px;top:37.38px;font-size:20.16px;color:#fff;transform-origin:0 0;transform:scaleX(0.93);font-weight:400;text-shadow:.3px 0 0 #fff">我们</div><div class="t sf" style="left:13.39px;top:57.55px;font-size:19.72px;color:#fff;transform-origin:0 0;transform:scaleX(0.914);font-weight:400;text-shadow:.3px 0 0 #fff">自己</div><div class="t sf" style="left:13.39px;top:77.95px;font-size:19.94px;color:#fff;transform-origin:0 0;transform:scaleX(0.923);font-weight:400;text-shadow:.3px 0 0 #fff">的故事</div><div class="t " style="left:13.39px;top:100.82px;font-size:3.29px;color:#fff;transform-origin:0 0;transform:scaleX(1.371);">(第一辑)</div><div class="t " style="left:13.39px;top:106.95px;font-size:4.17px;color:#fff;font-weight:700;font-style:italic;letter-spacing:.3px">2012-2022</div></div><div class="lb" style="left:-5.100000000000023px;width:121.60000000000002px">属于我们自己的故事2</div></div>
<div class="bk" style="left:539.5px;top:504px;width:109.5px"><div class="pg" style="left:105.5px;width:4px"></div><div class="cv" style="width:106.5px;background:#cfc7b6"><div class="a" style="left:-1.67px;top:-2.76px;width:110.18px;height:94.73px;background:radial-gradient(ellipse 40% 34% at 62% 62%,#fbf4e6 0,rgba(251,244,230,.85) 45%,rgba(251,244,230,0) 100%),radial-gradient(ellipse 30% 26% at 22% 30%,rgba(80,52,22,.9) 0,rgba(96,64,30,0) 100%),radial-gradient(ellipse 26% 20% at 85% 45%,rgba(110,70,40,.8) 0,rgba(110,70,40,0) 100%),radial-gradient(ellipse 30% 20% at 30% 75%,rgba(120,84,44,.75) 0,rgba(120,84,44,0) 100%),linear-gradient(to bottom,#6e5028 0,#b08c54 28%,#d2b480 60%,#c2a470 100%);"></div><div class="a" style="left:-1.67px;top:91.97px;width:110.18px;height:72.07px;background:#cfc7b6;background-image:radial-gradient(rgba(255,255,255,.35) .5px,rgba(0,0,0,0) .6px);background-size:2px 2px"></div><div class="a" style="left:-1.67px;top:91.55px;width:110.18px;height:1.03px;background:#b09868;"></div><svg class="a" style="left:0;top:0;overflow:visible;" width="170" height="160" viewBox="823.1 53.4 825.5 777.0"><path d="M1070 200 L1110 380 L1140 372 L1095 195Z" fill="#e8e0d0"/><path d="M900 440 C930 420 990 430 1000 470 L980 500 L900 500Z" fill="#8a8678"/><path d="M890 690 l14 -44 l10 20 l16 -30 l6 54 z M960 700 l10 -30 l12 30z M1000 700 l8 -34 l10 34z M1040 700 l8 -30 l12 30z M1080 700 l10 -34 l10 34z M1120 700 l10 -30 l10 30z M1160 700 l6 -26 l10 26z" fill="#c9b06a"/></svg><div class="a" style="left:83.79px;top:98.14px;width:13.8px;height:48.4px;background:rgba(0,0,0,0);border:1px solid #a8783a;outline:.5px solid #c9a66a;outline-offset:1px"></div><div class="t sf" style="left:85.85px;top:101.43px;font-size:10.09px;color:#a06a2a;font-weight:900">走</div><div class="t sf" style="left:85.85px;top:112.35px;font-size:10.07px;color:#a06a2a;font-weight:900">读</div><div class="t sf" style="left:85.85px;top:123.06px;font-size:10.07px;color:#a06a2a;font-weight:900">博</div><div class="t sf" style="left:85.85px;top:133.76px;font-size:10.09px;color:#a06a2a;font-weight:900">物</div></div><div class="lb" style="left:-4.100000000000023px;width:114.30000000000007px">走读博物2</div></div>
<div class="bk" style="left:685px;top:504px;width:120px"><div class="pg" style="left:117px;width:3px"></div><div class="cv" style="width:118px;background:#fff"><div class="t " style="left:3.53px;top:9.93px;font-size:21.04px;color:#1b7c8c;font-weight:700;letter-spacing:-.55px;-webkit-text-stroke:.45px #1b7c8c;transform-origin:0 0;transform:scaleX(.935)">PrintImages</div><div class="t sf" style="left:73.55px;top:8.92px;font-size:7.67px;color:#1b7c8c;transform-origin:0 0;transform:scaleX(1.121);font-weight:900">印刷视界</div><div class="a" style="left:-0.58px;top:11.24px;width:1.23px;height:29.24px;background:#1b7c8c;"></div><div class="a" style="left:9.71px;top:35.54px;width:13.59px;height:2.88px;background:#1b7c8c;"></div><div class="a" style="left:26.19px;top:35.54px;width:18.94px;height:2.88px;background:rgba(0,0,0,0);border:.6px solid #333"></div><div class="a" style="left:27.42px;top:36.57px;width:16.48px;height:0.82px;background:#777;"></div><div class="a" style="left:-0.58px;top:44.19px;width:119.44px;height:66.72px;background:radial-gradient(ellipse 18% 9% at 47% 32%,#f3e6c4 0,#e8d4a4 60%,rgba(232,212,164,0) 100%),radial-gradient(ellipse 12% 6% at 47% 56%,#e8dcc0 0,rgba(232,220,192,0) 100%),linear-gradient(to bottom,rgba(0,0,0,0) 0,rgba(0,0,0,0) 62%,#e2dcd6 72%,#c2b6b0 86%,#8a7a76 100%),linear-gradient(90deg,#8a6a58 0,#9a7a66 14%,#7a5c4c 30%,#6a544e 50%,#7a5c4c 70%,#9a7a66 86%,#8a6a58 100%);"></div><svg class="a" style="left:0;top:0;overflow:visible;" width="170" height="160" viewBox="72.8 53.4 825.5 777.0"><path d="M185 300 L520 300 L455 400 L250 400 Z" fill="none" stroke="#e8c820" stroke-width="5"/><path d="M215 330 L490 330 L440 400 L265 400 Z" fill="#4a3a30"/><ellipse cx="352" cy="365" rx="70" ry="22" fill="#efe2be"/><path d="M240 420 L470 420 L450 465 L262 465Z" fill="none" stroke="#3a6ad8" stroke-width="4"/><rect x="270" y="495" width="160" height="45" fill="#f6f4f0"/><rect x="315" y="510" width="60" height="10" fill="#d8402a"/><path d="M330 545 L380 545 L400 592 L310 592Z" fill="#c84a3a"/></svg><div class="a" style="left:-0.58px;top:110.91px;width:119.44px;height:12.36px;background:#2a8ca2;"></div><div class="a" style="left:-0.58px;top:123.27px;width:119.44px;height:40.77px;background:#1c4654;"></div></div><div class="rbw"><div class="rb">多媒体</div></div><div class="lb" style="left:-5px;width:126.29999999999995px">《印刷视界》2023年第<br>1-2</div></div>
<div class="bk" style="left:842px;top:504px;width:120px"><div class="pg" style="left:117px;width:3px"></div><div class="cv" style="width:118px;background:#5a8c2e"><div class="a" style="left:-1.08px;top:-2.76px;width:120.47px;height:166.8px;background:linear-gradient(to bottom,#68a6d8 0,#8fbee0 10%,#c2d8e4 22%,#e2e8de 31%,#dcdfc8 35%,#7d9664 37%,#456630 40%,#4c7030 46%,#69a036 51%,#7cb23c 60%,#70a636 68%,#5a8c2e 76%,#446c26 86%,#2e4a1e 100%);"></div><svg class="a" style="left:0;top:0;overflow:visible;" width="170" height="160" viewBox="835.2 53.4 825.5 777.0"><path d="M960 590 L1010 470 M1000 600 L1030 470 M1180 600 L1110 470 M1230 590 L1130 470" stroke="#3a5a24" stroke-width="6" fill="none"/><ellipse cx="1310" cy="395" rx="70" ry="28" fill="#2f5224"/><ellipse cx="1010" cy="392" rx="90" ry="22" fill="#35582a"/><path d="M990 520 l30 10 M1090 510 l24 14 M1190 540 l30 8" stroke="#c8d040" stroke-width="10"/></svg><div class="a" style="left:8.19px;top:8.15px;width:18.74px;height:1.44px;background:#333;"></div><div class="a" style="left:7.78px;top:20.51px;width:21.62px;height:8.03px;background:#1a1a1a;border-radius:1.5px"></div><div class="t " style="left:9.63px;top:20.76px;font-size:7.46px;color:#fff;font-weight:700">2023</div><div class="a" style="left:30.84px;top:20.92px;width:9.68px;height:7.21px;background:#e8e8e0;border-radius:1.5px"></div><div class="t " style="left:31.87px;top:21.95px;font-size:5.48px;color:#222;transform-origin:0 0;transform:scaleX(0.94);font-weight:900">1期</div><div class="t " style="left:7.16px;top:31.42px;font-size:12.93px;color:#e8421a;transform-origin:0 0;transform:scaleX(0.94);font-weight:900">辽宁</div><div class="t " style="left:31.46px;top:31.42px;font-size:12.93px;color:#141414;transform-origin:0 0;transform:scaleX(0.932);font-weight:900">创意农业</div><div class="a" style="left:7.16px;top:45.01px;width:55.6px;height:1.44px;background:rgba(40,40,40,.7);"></div></div><div class="lb" style="left:-5px;width:126px">《辽宁创意农业》（双月<br>刊)2023年第1期(总第<br>001期)</div></div>
<div class="bk" style="left:999px;top:504px;width:120.6px"><div class="pg" style="left:117.6px;width:3px"></div><div class="cv" style="width:118.6px;background:#1b6fb8"><div class="a" style="left:-2.53px;top:-2.76px;width:123.56px;height:125.62px;background:linear-gradient(to bottom,#1868b8 0,#1f78c8 30%,#3a90d8 48%,#7ab4e4 60%,#b8a890 66%,#6a5a50 74%,#4a4038 84%,#24242a 96%);"></div><div class="a" style="left:-0.25px;top:0.39px;width:119.97px;height:121.33px;background:linear-gradient(to bottom,#1866b6 0,#1d74c4 30%,#2c88d6 46%,#5aa2dc 58%,#8ab4d8 64%,rgba(0,0,0,0) 66%);"></div><div class="a" style="left:-0.25px;top:74.28px;width:119.97px;height:35.38px;background:repeating-linear-gradient(90deg,rgba(30,22,20,.85) 0,rgba(30,22,20,.85) .9px,rgba(0,0,0,0) .9px,rgba(0,0,0,0) 2.3px),repeating-linear-gradient(0deg,rgba(40,28,22,.8) 0,rgba(40,28,22,.8) .8px,rgba(0,0,0,0) .8px,rgba(0,0,0,0) 2.1px),radial-gradient(ellipse 30% 60% at 20% 55%,#f0a050 0,rgba(240,160,80,.6) 60%,rgba(200,120,60,.2) 100%),linear-gradient(to bottom,#7a6a68 0,#b8703a 25%,#c87a3a 55%,#6a4a30 85%,#2c2420 100%);clip-path:polygon(0 12%,6% 4%,12% 10%,20% 2%,26% 8%,34% 14%,44% 22%,55% 30%,70% 26%,80% 16%,90% 20%,100% 14%,100% 100%,0 100%)"></div><div class="a" style="left:57.11px;top:84.0px;width:50.94px;height:18.86px;background:linear-gradient(to bottom,#7a6e64 0,#6a5e56 50%,#4a4038 100%);"></div><div class="a" style="left:57.11px;top:82.83px;width:50.94px;height:1.95px;background:#4a4448;"></div><div class="a" style="left:59.05px;top:98.0px;width:48.61px;height:5.05px;background:repeating-linear-gradient(90deg,rgba(30,22,20,.85) 0,rgba(30,22,20,.85) .9px,rgba(0,0,0,0) .9px,rgba(0,0,0,0) 2.3px),repeating-linear-gradient(0deg,rgba(40,28,22,.8) 0,rgba(40,28,22,.8) .8px,rgba(0,0,0,0) .8px,rgba(0,0,0,0) 2.1px),linear-gradient(#d08a4a,#8a5a34);"></div><div class="a" style="left:32.61px;top:52.5px;width:6.22px;height:46.47px;background:repeating-linear-gradient(90deg,rgba(30,22,20,.85) 0,rgba(30,22,20,.85) .9px,rgba(0,0,0,0) .9px,rgba(0,0,0,0) 2.3px),repeating-linear-gradient(0deg,rgba(40,28,22,.8) 0,rgba(40,28,22,.8) .8px,rgba(0,0,0,0) .8px,rgba(0,0,0,0) 2.1px),linear-gradient(to bottom,#4a3a3a 0,#8a5a40 40%,#c07a40 100%);"></div><div class="a" style="left:34.17px;top:51.33px;width:3.11px;height:2.33px;background:#3a3038;"></div><div class="a" style="left:46.42px;top:61.05px;width:2.13px;height:26.25px;background:linear-gradient(#e8e4e0,#c8b8a8);"></div><div class="a" style="left:84.72px;top:69.8px;width:1.56px;height:14.59px;background:#c8c0b8;"></div><div class="a" style="left:106.89px;top:56.39px;width:5.83px;height:30.33px;background:repeating-linear-gradient(90deg,rgba(30,22,20,.85) 0,rgba(30,22,20,.85) .9px,rgba(0,0,0,0) .9px,rgba(0,0,0,0) 2.3px),repeating-linear-gradient(0deg,rgba(40,28,22,.8) 0,rgba(40,28,22,.8) .8px,rgba(0,0,0,0) .8px,rgba(0,0,0,0) 2.1px),linear-gradient(to bottom,#c07a40 0,#e09a50 50%,#a86a3a 100%);"></div><div class="a" style="left:90.16px;top:72.72px;width:9.73px;height:11.67px;background:radial-gradient(ellipse 50% 50% at 50% 50%,rgba(255,220,170,.9) 0,rgba(255,200,140,0) 100%);"></div><div class="a" style="left:-0.25px;top:101.89px;width:119.97px;height:19.83px;background:linear-gradient(to bottom,rgba(36,30,28,0) 0,#2a2422 30%,#221e1e 100%);"></div><div class="t sf" style="left:10.86px;top:13.43px;font-size:12.98px;color:#fff;transform-origin:0 0;transform:scaleX(0.943);font-weight:700">GUYANA</div><div class="t sf" style="left:10.86px;top:26.5px;font-size:4.45px;color:#fff;transform-origin:0 0;transform:scaleX(1.068);font-weight:700">A NEW FRONTIER</div><div class="t sf" style="left:10.86px;top:32.06px;font-size:4.45px;color:#fff;transform-origin:0 0;transform:scaleX(1.056);font-weight:700">FOR INVESTMENT</div><div class="t sf" style="left:77.79px;top:16.16px;font-size:8.98px;color:#fff;transform-origin:0 0;transform:scaleX(1.116);font-weight:900">圭亚那</div><div class="t sf" style="left:72.64px;top:29.43px;font-size:3.72px;color:#fff;transform-origin:0 0;transform:scaleX(1.352);font-weight:700">国际投资新前沿</div><div class="a" style="left:86.44px;top:38.01px;width:12.35px;height:11.53px;background:radial-gradient(ellipse 50% 50% at 50% 50%,#f4f0e0 0,#e8c890 40%,rgba(200,140,70,.6) 70%,rgba(200,122,48,0) 100%);"></div><div class="a" style="left:30.42px;top:110.91px;width:57.66px;height:1.44px;background:rgba(255,255,255,.8);"></div><div class="a" style="left:30.42px;top:114.0px;width:57.66px;height:1.44px;background:rgba(255,255,255,.8);"></div><div class="a" style="left:40.72px;top:117.5px;width:35.42px;height:1.65px;background:rgba(255,255,255,.7);"></div><div class="a" style="left:-2.53px;top:122.44px;width:123.56px;height:43.66px;background:#fff;"></div><div class="a" style="left:-0.05px;top:124.91px;width:39.74px;height:39.13px;background:linear-gradient(135deg,#8a929c,#c8ccd2 40%,#7a828c 70%,#a8aeb6);"></div><div class="a" style="left:41.13px;top:124.91px;width:36.66px;height:39.13px;background:linear-gradient(to bottom,#3a5a30,#2a4424 60%,#1e3218);"></div><div class="a" style="left:79.43px;top:124.91px;width:39.13px;height:39.13px;background:radial-gradient(ellipse 22% 30% at 45% 35%,#2a4ab0 0,rgba(42,74,176,0) 100%),linear-gradient(to bottom,#3a3a20,#2a3a1a);"></div></div><div class="lb" style="left:-5px;width:127px">GUYANA 圭亚那</div></div>
<div class="bk" style="left:1157px;top:504px;width:161.3px"><div class="pg" style="left:158.3px;width:3px"></div><div class="cv" style="width:159.3px;background:#16307a"><div class="a" style="left:-1.96px;top:-2.76px;width:175.04px;height:166.8px;background:radial-gradient(ellipse 20% 22% at 46% 30%,rgba(255,240,235,.95) 0,rgba(200,190,230,.6) 35%,rgba(120,140,210,0) 100%),radial-gradient(ellipse 36% 30% at 32% 30%,rgba(120,150,210,.75) 0,rgba(120,150,210,0) 100%),radial-gradient(ellipse 30% 34% at 80% 28%,rgba(90,120,190,.8) 0,rgba(90,120,190,0) 100%),linear-gradient(to bottom,rgba(120,140,190,.55) 0,rgba(120,140,190,.45) 30%,rgba(120,140,190,0) 55%),linear-gradient(to bottom,#2a4aa4 0,#3458aa 22%,#28489e 44%,#193890 58%,#17348c 100%);"></div><svg class="a" style="left:0;top:0;overflow:visible;" width="170" height="160" viewBox="-208.8 53.4 825.5 777.0"><path d="M330 150 C400 110 500 120 570 170 L570 500 L440 470 L340 330 Z" fill="#2c4c94"/><path d="M420 250 C470 230 540 260 570 330 L570 480 L470 440Z" fill="#243f86"/><path d="M205 142 L300 128 L347 240 L268 264 Z" fill="#8fc0ea"/><path d="M216 150 L294 139 L334 234 L272 252 Z" fill="#3c7ccc"/><path d="M258 235 C290 222 320 232 335 262 L300 292 L262 270Z" fill="#d9b2a2"/><path d="M345 200 C380 185 420 200 432 228 L400 250 L352 236Z" fill="#d9b2a2"/><path d="M-10 200 L40 180 L80 230 L130 195 L170 250 L140 330 L60 360 L-10 330Z" fill="#1b2650" opacity=".6"/><path d="M-200 270 L-120 230 L-60 280 L-10 250 L-10 340 L-120 380Z" fill="#1f2c5c" opacity=".55"/><circle cx="378" cy="105" r="14" fill="none" stroke="#fff" stroke-width="4"/></svg><div class="t " style="left:125.78px;top:8.77px;font-size:3.06px;color:#fff;transform-origin:0 0;transform:scaleX(1.363);font-weight:700">中国移动</div><div class="a" style="left:125.78px;top:13.09px;width:16.68px;height:1.03px;background:rgba(255,255,255,.7);"></div><div class="t " style="left:10.81px;top:91.14px;font-size:4.82px;color:#fff;transform-origin:0 0;transform:scaleX(1.218);font-weight:700">中国移动</div><div class="t " style="left:10.81px;top:99.17px;font-size:3.51px;color:#fff;transform-origin:0 0;transform:scaleX(1.265);">5G 新动能，赋能新工厂</div><div class="t " style="left:10.81px;top:110.29px;font-size:5.04px;color:#fff;transform-origin:0 0;transform:scaleX(1.129);font-weight:700">5G+ 工业互联网</div><div class="t " style="left:10.81px;top:118.32px;font-size:3.29px;color:#fff;transform-origin:0 0;transform:scaleX(1.302);font-weight:700">助力集团制造业高端化、智能化、绿色化发展</div><div class="a" style="left:10.81px;top:135.83px;width:60.34px;height:1.65px;background:rgba(255,255,255,.55);"></div><div class="a" style="left:10.81px;top:140.57px;width:98.43px;height:1.64px;background:rgba(255,255,255,.55);"></div></div><div class="lb" style="left:-4.599999999999909px;width:167.5999999999999px">5G+工业互联网智慧园区手册</div></div>
<div class="bk" style="left:1355px;top:504px;width:119px"><div class="pg" style="left:116px;width:3px"></div><div class="cv" style="width:117px;background:#fff"><div class="a" style="left:7.69px;top:14.54px;width:6.59px;height:1.44px;background:#333;"></div><div class="a" style="left:7.69px;top:18.86px;width:18.94px;height:0.82px;background:#777;"></div><div class="a" style="left:7.69px;top:22.98px;width:19.56px;height:0.82px;background:#777;"></div><div class="a" style="left:7.69px;top:26.69px;width:29.86px;height:0.82px;background:#777;"></div><div class="a" style="left:7.69px;top:34.92px;width:22.24px;height:1.03px;background:#666;"></div><div class="t " style="left:55.05px;top:16.39px;font-size:10.3px;color:#1a2a7c;transform-origin:0 0;transform:scaleX(1.32);font-weight:900;font-style:italic;letter-spacing:.3px">龙城新语</div><div class="t " style="left:55.46px;top:27.51px;font-size:3.87px;color:#1a2a7c;font-weight:700;letter-spacing:1.15px">LONGCHENGXINYU</div><div class="a" style="left:96.65px;top:58.4px;width:14.41px;height:14.62px;background:#2a3a66;background-image:repeating-linear-gradient(0deg,rgba(255,255,255,.0) 0,rgba(255,255,255,0) 1.2px,rgba(255,255,255,.75) 1.2px,rgba(255,255,255,.75) 2px),repeating-linear-gradient(90deg,rgba(255,255,255,0) 0,rgba(255,255,255,0) 1.3px,rgba(255,255,255,.8) 1.3px,rgba(255,255,255,.8) 2.1px);"></div><div class="t " style="left:7.69px;top:61.68px;font-size:2.68px;color:#444;font-weight:700;letter-spacing:.2px">Read More</div><div class="t " style="left:7.69px;top:65.38px;font-size:2.7px;color:#333;font-weight:700;letter-spacing:.2px">Read More Write</div><div class="a" style="left:7.69px;top:80.23px;width:103.58px;height:69.4px;background:radial-gradient(ellipse 50% 40% at 50% 45%,#1048c8 0,rgba(16,72,200,0) 100%),linear-gradient(to bottom,#0a3cb0 0,#0a36a8 80%,#a82830 88%,#c03038 100%);"></div><div class="t " style="left:45.78px;top:91.77px;font-size:5.07px;color:#e8d8a0;font-weight:700;letter-spacing:1.4px">· 2023 ·</div><div class="t sf" style="left:26.22px;top:103.75px;font-size:12.27px;color:#f0dca0;transform-origin:0 0;transform:scaleX(1.08);font-weight:900;font-style:italic;letter-spacing:.6px;text-shadow:0 0 1px #a88a40">高质量发展</div><div class="a" style="left:26.22px;top:119.15px;width:67.96px;height:0.41px;background:rgba(232,216,160,.7);"></div><div class="a" style="left:47.84px;top:123.88px;width:23.68px;height:1.45px;background:rgba(255,255,255,.7);"></div><div class="a" style="left:35.49px;top:128.0px;width:50.45px;height:1.24px;background:rgba(255,255,255,.55);"></div><div class="a" style="left:33.43px;top:129.03px;width:54.57px;height:10.3px;background:repeating-linear-gradient(90deg,rgba(240,190,80,0) 0,rgba(240,190,80,.9) 1.2px,rgba(240,190,80,.2) 2.4px,rgba(240,190,80,.95) 3.4px,rgba(240,190,80,0) 5px);clip-path:polygon(0 80%,8% 60%,14% 70%,22% 30%,28% 50%,36% 10%,42% 40%,50% 55%,58% 70%,66% 40%,74% 60%,82% 50%,90% 70%,100% 80%,100% 100%,0 100%)"></div></div><div class="lb" style="left:-5px;width:126px">龙城新语第十三期</div></div>
<div class="bk" style="left:77.5px;top:717px;width:115.7px"><div class="pg" style="left:112.7px;width:3px"></div><div class="cv" style="width:113.7px;background:#a80e16"><div class="a" style="left:-3.08px;top:-2.41px;width:119.44px;height:164.75px;background:radial-gradient(ellipse 60% 30% at 50% 30%,#b8141c 0,rgba(184,20,28,0) 100%),linear-gradient(to bottom,#a80e16 0,#ae1018 50%,#a00c14 100%);"></div><svg class="a" style="left:0;top:0;overflow:visible;" width="170" height="160" viewBox="85.0 111.7 825.5 777.0"><path d="M85 640 L360 470 L637 640 Z" fill="#b52a30" opacity=".55"/><path d="M205 262 l14 -40 l10 22 l16 -30 l8 36 l20 -6 l-12 20 l-50 6z" fill="#ecd09a"/><path d="M200 272 C230 262 250 266 275 272" stroke="#ecd09a" stroke-width="4" fill="none"/></svg><div class="t sf" style="left:42.22px;top:23.7px;font-size:7.88px;color:#ecd09a;transform-origin:0 0;transform:scaleX(0.854);font-weight:900">香港杭州商會</div><div class="a" style="left:42.22px;top:31.78px;width:40.36px;height:0.41px;background:#ecd09a;"></div><div class="t sf" style="left:34.39px;top:51.49px;font-size:7.67px;color:#e6c48c;transform-origin:0 0;transform:scaleX(1.02);font-weight:900">港杭州商會</div><div class="t sf" style="left:16.48px;top:65.49px;font-size:7.46px;color:#e6c48c;transform-origin:0 0;transform:scaleX(1.071);font-weight:900">第二屆理事會就職典禮</div></div><div class="lb" style="left:-4.099999999999994px;width:121.6px">庆祝中华人民共和国成<br>立七十四周年暨香港杭<br>州商会第二届理事会就<br>职典礼1</div></div>
<div class="bk" style="left:229.5px;top:717px;width:119.8px"><div class="pg" style="left:116.8px;width:3px"></div><div class="cv" style="width:117.8px;background:#2c4654"><div class="a" style="left:-1.67px;top:-2.41px;width:120.47px;height:164.75px;background:radial-gradient(ellipse 50% 10% at 60% 44%,rgba(200,205,200,.9) 0,rgba(200,205,200,0) 100%),radial-gradient(ellipse 40% 8% at 25% 38%,rgba(150,165,170,.8) 0,rgba(150,165,170,0) 100%),radial-gradient(ellipse 45% 12% at 70% 78%,rgba(225,225,218,.95) 0,rgba(225,225,218,0) 100%),radial-gradient(ellipse 40% 10% at 22% 84%,rgba(190,195,190,.8) 0,rgba(190,195,190,0) 100%),linear-gradient(to bottom,#14262f 0,#1b333f 16%,#2c4856 28%,#5b7884 40%,#4f6e7c 52%,#4c6c7c 62%,#6e8892 72%,#98a8a8 84%,#667a80 100%);"></div><svg class="a" style="left:0;top:0;overflow:visible;" width="170" height="160" viewBox="823.1 111.7 825.5 777.0"><path d="M1030 505 C1040 490 1070 492 1100 505 L1230 560 L1392 548 L1392 560 L1250 580 L1290 600 L1280 612 L1220 596 L1170 622 L1150 618 L1170 585 L1060 545 C1040 535 1028 520 1030 505Z" fill="#dfe3e4"/><path d="M1195 560 L1215 520 L1228 522 L1225 566Z" fill="#c5cccf"/><path d="M960 592 L1170 585 L1172 598 L965 600Z" fill="#2c3c46"/><path d="M1060 545 L1170 585 L1150 618 C1120 600 1085 575 1060 545Z" fill="#aab4b8"/></svg><div class="t sf" style="left:85.44px;top:11.34px;font-size:17.96px;color:#eef2f2;font-weight:500">捷</div><div class="t sf" style="left:85.44px;top:38.11px;font-size:17.97px;color:#eef2f2;font-weight:500">锐</div><div class="t sf" style="left:85.44px;top:61.79px;font-size:17.97px;color:#eef2f2;font-weight:500">家</div><div class="a" style="left:9.66px;top:65.55px;width:1.24px;height:35.01px;background:rgba(255,255,255,.3);"></div><div class="a" style="left:15.84px;top:71.73px;width:1.23px;height:37.07px;background:rgba(255,255,255,.3);"></div><div class="a" style="left:22.02px;top:75.85px;width:1.23px;height:28.83px;background:rgba(255,255,255,.3);"></div><div class="a" style="left:27.78px;top:79.97px;width:1.24px;height:30.89px;background:rgba(255,255,255,.3);"></div><div class="a" style="left:106.45px;top:12.01px;width:1.03px;height:12.35px;background:rgba(255,255,255,.3);"></div><div class="a" style="left:110.98px;top:12.01px;width:1.03px;height:12.35px;background:rgba(255,255,255,.3);"></div></div><div class="lb" style="left:-5.199999999999989px;width:126.5px">捷锐家7</div></div>
<div class="bk" style="left:386.5px;top:717px;width:119.5px"><div class="pg" style="left:116.5px;width:3px"></div><div class="cv" style="width:117.5px;background:#fff"><div class="t sf" style="left:28.39px;top:13.63px;font-size:19.72px;color:#1b4ca8;transform-origin:0 0;transform:scaleX(0.783);font-weight:900;font-style:italic">印象日晖</div><div class="t " style="left:28.8px;top:33.61px;font-size:2.7px;color:#333;font-weight:700;letter-spacing:1.1px">IMPRESSION JUNIEHEI</div><div class="a" style="left:93.67px;top:31.16px;width:6.8px;height:1.44px;background:#333;"></div><div class="a" style="left:93.67px;top:34.04px;width:9.68px;height:1.44px;background:#333;"></div><div class="a" style="left:30.45px;top:40.63px;width:8.24px;height:2.06px;background:#d84a3a;"></div><div class="a" style="left:30.45px;top:45.37px;width:8.24px;height:1.03px;background:#999;"></div><div class="a" style="left:32.1px;top:47.63px;width:6.59px;height:1.03px;background:#aaa;"></div><div class="a" style="left:46.31px;top:40.63px;width:8.24px;height:2.06px;background:#e8a030;"></div><div class="a" style="left:46.31px;top:45.37px;width:8.24px;height:1.03px;background:#999;"></div><div class="a" style="left:47.96px;top:47.63px;width:6.59px;height:1.03px;background:#aaa;"></div><div class="a" style="left:61.75px;top:40.63px;width:8.24px;height:2.06px;background:#5aa840;"></div><div class="a" style="left:61.75px;top:45.37px;width:8.24px;height:1.03px;background:#999;"></div><div class="a" style="left:63.4px;top:47.63px;width:6.59px;height:1.03px;background:#aaa;"></div><div class="a" style="left:77.2px;top:40.63px;width:11.32px;height:2.06px;background:#8aa0c0;"></div><div class="a" style="left:77.2px;top:45.37px;width:11.32px;height:1.03px;background:#999;"></div><div class="a" style="left:78.85px;top:47.63px;width:9.67px;height:1.03px;background:#aaa;"></div><div class="a" style="left:19.69px;top:73.51px;width:69.0px;height:60.38px;background:radial-gradient(ellipse 50% 50% at 50% 55%,rgba(200,224,246,.95) 0,rgba(214,232,248,.85) 60%,rgba(225,238,250,0) 100%);"></div><div class="a" style="left:24.58px;top:75.23px;width:19.55px;height:38.53px;background:rgba(176,208,238,.55);"></div><div class="a" style="left:65.69px;top:94.21px;width:10.35px;height:40.25px;background:linear-gradient(#2b68b4,#3f7fc8);"></div><div class="a" style="left:48.73px;top:108.58px;width:11.5px;height:25.88px;background:#4d8ed4;"></div><div class="a" style="left:57.36px;top:115.2px;width:8.62px;height:19.26px;background:#77aae0;"></div><div class="a" style="left:35.5px;top:116.63px;width:13.23px;height:17.83px;background:#9cc2ea;"></div><div class="a" style="left:26.88px;top:79.83px;width:10.35px;height:8.05px;background:#4a8cd2;border-radius:50%"></div><div class="a" style="left:42.98px;top:82.71px;width:8.62px;height:6.32px;background:#6aa4de;"></div><div class="a" style="left:82.08px;top:75.23px;width:11.5px;height:12.65px;background:rgba(150,190,232,.8);"></div><svg class="a" style="left:0;top:0;overflow:visible;" width="170" height="160" viewBox="36.5 24.3 591.3 556.5"><path d="M214 236 l16 14 l-16 14 l-16 -14z" fill="#3f86cc"/><path d="M180 335 l18 -10 l4 8 l-18 10z" fill="#e8a060"/><ellipse cx="284" cy="300" rx="14" ry="20" fill="#1c2c58"/><circle cx="284" cy="276" r="6" fill="#3a2418"/><path d="M270 318 l-8 34 h10 l8 -28z M292 318 l8 34 h-8 l-6 -28z" fill="#22345e"/><ellipse cx="216" cy="356" rx="16" ry="18" fill="#1c2c58"/><circle cx="212" cy="333" r="6" fill="#2a1a12"/><path d="M204 370 l-14 14 l24 6 l10 -14z" fill="#22345e"/><ellipse cx="146" cy="412" rx="12" ry="22" fill="#2a62b0"/><circle cx="144" cy="384" r="6" fill="#2a1a12"/><path d="M138 432 l-8 30 h10 l10 -26z" fill="#1c2c58"/><ellipse cx="188" cy="398" rx="11" ry="20" fill="#e0502a"/><circle cx="186" cy="372" r="6" fill="#2a1a12"/><path d="M180 416 l-2 44 h10 l6 -44z" fill="#1c2c58"/><ellipse cx="254" cy="432" rx="12" ry="16" fill="#2a62b0"/><circle cx="254" cy="410" r="6" fill="#5a2a18"/><path d="M244 446 l-10 20 l28 4 l4 -20z" fill="#e0602a"/><ellipse cx="326" cy="408" rx="14" ry="22" fill="#1c2c58"/><circle cx="324" cy="380" r="6" fill="#2a1a12"/><path d="M312 428 l-10 10 l22 24 l10 -6z" fill="#22345e"/><path d="M104 486 c0 -26 14 -42 34 -46 c-2 22 -12 40 -34 46z M112 488 c14 -20 32 -26 46 -22 c-8 14 -24 22 -46 22z M384 484 c0 -30 -14 -48 -34 -54 c0 24 10 44 34 54z M372 488 c-12 -18 -30 -24 -44 -20 c8 12 22 20 44 20z" fill="#a4c8ec"/></svg></div><div class="lb" style="left:-5.199999999999989px;width:125.69999999999999px">印象日晖2</div></div>
<div class="bk" style="left:542px;top:717px;width:120.4px"><div class="pg" style="left:117.4px;width:3px"></div><div class="cv" style="width:118.4px;background:#0b66a8"><div class="a" style="left:-1.08px;top:-2.41px;width:121.5px;height:164.75px;background:linear-gradient(to bottom,#095a9c 0,#0b64a6 30%,#1276b6 55%,#1c8cc8 80%,#2a9cd2 100%);"></div><div class="a" style="left:13.34px;top:73.79px;width:46.33px;height:52.51px;background:radial-gradient(circle,rgba(160,215,245,.0) 0,rgba(160,215,245,.10) 60%,rgba(160,215,245,.14) 68%,rgba(160,215,245,0) 72%);background-size:100% 100%"></div><svg class="a" style="left:0;top:0;overflow:visible;" width="170" height="160" viewBox="835.2 111.7 825.5 777.0"><path d="M1302 470 L1318 470 L1340 800 L1298 800 Z" fill="#e9ecef"/><path d="M1318 470 L1340 800 L1325 800 L1310 470Z" fill="#b9c0c8"/><path d="M1268 165 L1276 200 L1300 440 L1284 452 L1270 300 Z" fill="#dfe3e6"/><path d="M1268 165 L1284 452 L1278 455 L1266 300Z" fill="#9aa2aa"/><path d="M1128 597 L1280 448 L1296 468 L1160 580 Z" fill="#f2f4f6"/><path d="M1300 462 L1320 455 L1388 650 L1380 655 L1340 570 Z" fill="#1c2630"/><path d="M1282 440 L1368 420 L1378 445 L1300 472 Z" fill="#eef0f2"/><circle cx="1290" cy="456" r="12" fill="#d0d4d8"/></svg><div class="t " style="left:12.31px;top:23.54px;font-size:9.86px;color:#fff;font-weight:900;letter-spacing:1.25px">产品宣传册</div><div class="t " style="left:10.87px;top:36.31px;font-size:6.57px;color:#fff;transform-origin:0 0;transform:scaleX(1.003);font-weight:900">（风电篇）</div><div class="a" style="left:12.31px;top:44.96px;width:53.54px;height:0.41px;background:rgba(255,255,255,.6);"></div><div class="a" style="left:12.31px;top:47.84px;width:25.74px;height:1.03px;background:rgba(255,255,255,.6);"></div><div class="a" style="left:12.31px;top:51.55px;width:14.41px;height:1.03px;background:rgba(255,255,255,.6);"></div><div class="t " style="left:12.31px;top:55.67px;font-size:2.4px;color:#fff;transform-origin:0 0;transform:scaleX(1.149);font-weight:700">扬帆远航、智领风电、让清洁能源更美好</div><div class="t " style="left:12.31px;top:59.99px;font-size:2.41px;color:#fff;transform-origin:0 0;transform:scaleX(1.171);font-weight:700">打造可靠的风电装备广泛应用于一家可靠及可信赖伙伴</div></div><div class="lb" style="left:-4.7999999999999545px;width:125.59999999999991px">产品宣传册（风电篇）</div></div>
<div class="bk" style="left:698px;top:717px;width:121.6px"><div class="pg" style="left:118.6px;width:3px"></div><div class="cv" style="width:119.6px;background:#fff"><div class="a" style="left:10.83px;top:14.69px;width:21.83px;height:1.64px;background:#333;"></div><div class="t sf" style="left:12.48px;top:26.31px;font-size:14.89px;color:#0c0c0c;transform-origin:0 0;transform:scaleX(0.93);font-weight:900;font-style:italic">博海北斗</div><div class="a" style="left:12.48px;top:40.63px;width:57.04px;height:1.24px;background:#222;background-image:repeating-linear-gradient(90deg,rgba(255,255,255,0) 0,rgba(255,255,255,0) 1.6px,#fff 1.6px,#fff 2.2px)"></div><div class="a" style="left:94.23px;top:20.45px;width:10.92px;height:1.03px;background:#666;"></div><div class="a" style="left:96.5px;top:26.01px;width:8.23px;height:7.0px;background:#fff;background-image:repeating-linear-gradient(0deg,rgba(20,20,20,.85) 0,rgba(20,20,20,.85) .9px,rgba(0,0,0,0) .9px,rgba(0,0,0,0) 1.9px),repeating-linear-gradient(90deg,rgba(20,20,20,.8) 0,rgba(20,20,20,.8) 1px,rgba(0,0,0,0) 1px,rgba(0,0,0,0) 2.1px);"></div><div class="a" style="left:0.02px;top:49.93px;width:119.04px;height:79.36px;background:radial-gradient(ellipse 22% 30% at 20% 86%,rgba(70,10,6,.55) 0,rgba(70,10,6,0) 100%),radial-gradient(ellipse 16% 60% at 4% 50%,#dc4c2a 0,rgba(216,74,42,.85) 50%,rgba(216,74,42,0) 100%),linear-gradient(100deg,#c03a20 0,#9a2416 22%,#8a1a10 55%,#7e160e 100%);"></div><div class="a" style="left:0.02px;top:49.93px;width:119.04px;height:79.36px;background:radial-gradient(circle at 30% 40%,rgba(240,246,236,.95) 0,rgba(240,246,236,.9) .55px,rgba(240,246,236,0) .9px),radial-gradient(circle at 70% 75%,rgba(240,246,236,.8) 0,rgba(240,246,236,.7) .4px,rgba(240,246,236,0) .8px),radial-gradient(ellipse 50% 50% at 50% 50%,rgba(86,176,74,.85) 0,rgba(86,176,74,0) 100%),radial-gradient(ellipse 50% 50% at 50% 50%,rgba(16,60,20,.8) 0,rgba(16,60,20,0) 100%),linear-gradient(#2d742e,#276528);background-size:7.9px 6.7px,11.3px 9.1px,4.7px 3.9px,6.1px 5.3px,100% 100%;background-position:0 0,3px 2px,1px 1px,3px 2.5px,0 0;clip-path:polygon(24% 0,100% 0,100% 50%,97% 58%,98% 66%,92% 70%,90% 80%,85% 84%,82% 74%,84% 64%,80% 58%,82% 50%,76% 46%,72% 48%,70% 40%,64% 36%,62% 28%,56% 26%,54% 18%,48% 16%,44% 10%,38% 12%,32% 4%)"></div><div class="a" style="left:0.02px;top:49.93px;width:119.04px;height:79.36px;background:radial-gradient(circle at 30% 40%,rgba(240,246,236,.95) 0,rgba(240,246,236,.9) .55px,rgba(240,246,236,0) .9px),radial-gradient(circle at 70% 75%,rgba(240,246,236,.8) 0,rgba(240,246,236,.7) .4px,rgba(240,246,236,0) .8px),radial-gradient(ellipse 50% 50% at 50% 50%,rgba(86,176,74,.85) 0,rgba(86,176,74,0) 100%),radial-gradient(ellipse 50% 50% at 50% 50%,rgba(16,60,20,.8) 0,rgba(16,60,20,0) 100%),linear-gradient(#2d742e,#276528);background-size:7.9px 6.7px,11.3px 9.1px,4.7px 3.9px,6.1px 5.3px,100% 100%;background-position:0 0,3px 2px,1px 1px,3px 2.5px,0 0;clip-path:polygon(36% 16%,44% 20%,50% 26%,52% 34%,60% 38%,66% 48%,72% 54%,74% 62%,78% 66%,80% 80%,76% 72%,72% 66%,68% 58%,62% 52%,56% 44%,50% 40%,44% 30%,38% 26%);opacity:.75"></div><div class="a" style="left:14.95px;top:135.57px;width:28.83px;height:1.23px;background:#555;"></div><div class="a" style="left:64.37px;top:135.57px;width:14.42px;height:1.23px;background:#777;"></div></div><div class="lb" style="left:-4px;width:125.60000000000002px">《博海北斗》第27期</div></div>
<div class="bk" style="left:856px;top:717px;width:120.5px"><div class="pg" style="left:116.5px;width:4px"></div><div class="cv" style="width:117.5px;background:#e9f0f8"><div class="a" style="left:-3.02px;top:-2.41px;width:123.56px;height:164.75px;background:linear-gradient(100deg,#e9f0f8 0,#f3f7fb 40%,#d5e4f4 70%,#a9c8ea 100%);"></div><svg class="a" style="left:0;top:0;overflow:visible;" width="170" height="160" viewBox="854.7 111.7 825.5 777.0"><path d="M1250 112 C1340 140 1400 150 1430 140 L1430 800 L1150 800 C1250 700 1330 560 1380 400 C1400 300 1350 180 1250 112Z" fill="#a4c4e8"/><path d="M1090 112 C1200 130 1300 170 1360 220 C1300 200 1200 180 1090 180Z" fill="#fff" opacity=".9"/><path d="M860 230 C1000 200 1200 230 1380 330 C1200 280 1000 270 860 300Z" fill="#fff" opacity=".85"/><path d="M860 440 C1000 430 1200 470 1340 540 C1200 510 1000 490 860 500Z" fill="#fff" opacity=".9"/><path d="M860 560 C1000 560 1180 600 1290 650 C1180 630 1000 610 860 620Z" fill="#fff" opacity=".9"/><path d="M860 660 C980 665 1120 700 1220 750 C1120 730 980 715 860 720Z" fill="#fff" opacity=".9"/><path d="M1150 800 C1250 700 1330 560 1380 400 L1400 430 C1360 580 1290 700 1200 800Z" fill="#c4d9f0"/></svg><div class="t sf" style="left:15.52px;top:32.06px;font-size:14.23px;color:#2d5d9c;font-weight:700;letter-spacing:2.1px">芳华万卷</div><div class="t sf" style="left:31.99px;top:52.04px;font-size:14.68px;color:#2d5d9c;font-weight:700;letter-spacing:2.1px">阅见春天</div><div class="a" style="left:99.54px;top:31.57px;width:1.64px;height:31.92px;background:rgba(60,90,140,.6);"></div><div class="a" style="left:103.24px;top:31.57px;width:1.44px;height:27.8px;background:rgba(60,90,140,.5);"></div><div class="t " style="left:18.6px;top:123.78px;font-size:4.17px;color:#9db4cc;">Shenzhen</div><div class="t " style="left:24.78px;top:129.86px;font-size:4.78px;color:#9db4cc;">2022.4.23</div></div><div class="rbw"><div class="rb">多媒体</div></div><div class="lb" style="left:-5px;width:126px">芳华万卷 阅见春天</div></div>
<div class="bk" style="left:1012px;top:717px;width:115px"><div class="pg" style="left:112px;width:3px"></div><div class="cv" style="width:113px;background:#fff"><div class="a" style="left:0.24px;top:0.06px;width:112.85px;height:18.13px;background:#28489a;"></div><div class="t " style="left:0.65px;top:-1.66px;font-size:18.51px;color:#4a68b4;">Parents</div><div class="t sf" style="left:8.48px;top:8.3px;font-size:9.85px;color:#fff;transform-origin:0 0;transform:scaleX(0.97);font-weight:900">家长学习报</div><div class="a" style="left:91.26px;top:2.95px;width:18.54px;height:1.23px;background:rgba(255,255,255,.8);"></div><div class="a" style="left:100.73px;top:7.48px;width:9.27px;height:8.65px;background:#fff;background-image:repeating-linear-gradient(0deg,rgba(20,20,20,.85) 0,rgba(20,20,20,.85) .9px,rgba(0,0,0,0) .9px,rgba(0,0,0,0) 1.9px),repeating-linear-gradient(90deg,rgba(20,20,20,.8) 0,rgba(20,20,20,.8) 1px,rgba(0,0,0,0) 1px,rgba(0,0,0,0) 2.1px);"></div><div class="a" style="left:0.24px;top:19.22px;width:112.85px;height:2.06px;background:#e6ebf6;"></div><div class="a" style="left:1.06px;top:19.63px;width:38.72px;height:1.23px;background:#28489a;"></div><div class="a" style="left:45.96px;top:19.83px;width:63.84px;height:0.83px;background:#6a7ab0;"></div><div class="t sf" style="left:19.19px;top:27.77px;font-size:5.69px;color:#2c6e2c;transform-origin:0 0;transform:scaleX(1.013);font-weight:900">高考倒计时，家长该怎么做?</div><div class="a" style="left:85.08px;top:34.66px;width:18.95px;height:1.03px;background:#888;"></div><div class="a" style="left:7.86px;top:37.13px;width:30.27px;height:101.53px;background:repeating-linear-gradient(0deg,rgba(90,90,90,0.5) 0,rgba(90,90,90,0.5) 0.6px,rgba(90,90,90,0) 0.6px,rgba(90,90,90,0) 1.55px);"></div><div class="a" style="left:40.81px;top:37.13px;width:31.09px;height:101.53px;background:repeating-linear-gradient(0deg,rgba(90,90,90,0.5) 0,rgba(90,90,90,0.5) 0.6px,rgba(90,90,90,0) 0.6px,rgba(90,90,90,0) 1.55px);"></div><div class="a" style="left:74.79px;top:37.13px;width:30.06px;height:101.53px;background:repeating-linear-gradient(0deg,rgba(90,90,90,0.5) 0,rgba(90,90,90,0.5) 0.6px,rgba(90,90,90,0) 0.6px,rgba(90,90,90,0) 1.55px);"></div><div class="a" style="left:9.71px;top:51.75px;width:23.48px;height:3.09px;background:#fff;"></div><div class="a" style="left:10.95px;top:52.37px;width:21.0px;height:1.65px;background:#3a8a3a;"></div><div class="a" style="left:44.72px;top:76.88px;width:23.07px;height:3.09px;background:#fff;"></div><div class="a" style="left:45.96px;top:77.49px;width:20.59px;height:1.65px;background:#3a8a3a;"></div><div class="a" style="left:42.66px;top:111.27px;width:25.54px;height:3.09px;background:#fff;"></div><div class="a" style="left:43.9px;top:111.88px;width:23.06px;height:1.65px;background:#3a8a3a;"></div><div class="a" style="left:44.72px;top:133.92px;width:19.36px;height:3.09px;background:#fff;"></div><div class="a" style="left:45.96px;top:134.54px;width:16.88px;height:1.64px;background:#3a8a3a;"></div><div class="a" style="left:73.55px;top:81.82px;width:27.18px;height:3.09px;background:#fff;"></div><div class="a" style="left:74.79px;top:82.44px;width:24.71px;height:1.64px;background:#3a8a3a;"></div></div><div class="lb" style="left:-4.5px;width:120.5px">《家长学习报》第24期</div></div>
<div class="bk" style="left:1164px;top:717px;width:162px"><div class="pg" style="left:159px;width:3px"></div><div class="cv" style="width:160px;background:#1e3f6e"><div class="a" style="left:-3.08px;top:-2.41px;width:166.81px;height:164.75px;background:radial-gradient(ellipse 7% 1.8% at 38% 54.8%,#ff5a30 0,rgba(240,110,80,.85) 45%,rgba(240,140,110,0) 100%),radial-gradient(ellipse 40% 4.5% at 40% 55%,rgba(226,150,140,.85) 0,rgba(226,150,140,0) 100%),linear-gradient(115deg,rgba(0,0,0,0) 18%,rgba(110,140,190,.55) 34%,rgba(120,150,200,.5) 42%,rgba(0,0,0,0) 60%),linear-gradient(to bottom,#13224a 0,#1b3260 18%,#28487c 34%,#3a5e92 46%,#5474a0 52%,#6a88b2 56%,#93acc8 60%,#9db4d0 66%,#8ba4c0 72%,#54708e 80%,#2c405a 90%,#20324a 100%);"></div><svg class="a" style="left:0;top:0;overflow:visible;" width="170" height="160" viewBox="844.9 111.7 825.5 777.0"><path d="M845 600 C900 585 960 580 1040 590 C1120 600 1200 610 1250 612 C1180 625 1120 630 1080 640 C1150 650 1250 660 1390 668 L1300 760 L1240 900 L845 900Z" fill="#1e2e40"/><path d="M845 650 C950 640 1050 660 1150 700 C1250 740 1300 760 1300 900 L845 900Z" fill="#26384c"/><path d="M845 720 C900 700 940 690 1000 705 C940 720 900 740 860 770 L845 780Z" fill="#c8d8e8" opacity=".8"/><path d="M1060 630 C1120 620 1200 625 1260 640 C1200 648 1120 650 1060 640Z" fill="#c4d6ea" opacity=".85"/><path d="M1280 760 L1400 690 L1480 650 L1560 625 L1640 605 L1640 900 L1240 900Z" fill="#2e3430"/></svg><div class="a" style="left:-3.08px;top:-2.41px;width:166.81px;height:86.49px;background:radial-gradient(rgba(255,255,255,.9) .3px,rgba(0,0,0,0) .45px),radial-gradient(rgba(255,255,255,.7) .25px,rgba(0,0,0,0) .4px);background-size:7.3px 6.1px,4.1px 5.3px;background-position:0 0,2px 3px;opacity:.4"></div><div class="t sf" style="left:53.14px;top:17.6px;font-size:12.05px;color:#d81418;transform-origin:0 0;transform:scaleX(1.128);font-weight:900;font-style:italic">林邑影像</div><div class="t " style="left:44.29px;top:43.1px;font-size:5.91px;color:#e8eef6;font-weight:700;letter-spacing:2.5px">资兴篇：山水融情</div><div class="t " style="left:68.59px;top:67.82px;font-size:3.72px;color:#e89a50;transform-origin:0 0;transform:scaleX(1.31);">刘开足&nbsp;&nbsp;摄影</div></div><div class="lb" style="left:-5px;width:168px">林邑影像•资兴篇：山水融情</div></div>
<div class="bk" style="left:1363px;top:717px;width:112.6px"><div class="pg" style="left:109.6px;width:3px"></div><div class="cv" style="width:110.6px;background:#fff"><div class="a" style="left:7.61px;top:3.36px;width:94.73px;height:22.65px;background:linear-gradient(to bottom,#f2f2f0,#e8e8e6);"></div><div class="t sf" style="left:29.85px;top:8.25px;font-size:17.97px;color:#111;transform-origin:0 0;transform:scaleX(0.8);font-weight:900;font-style:italic">先聲</div><div class="a" style="left:68.36px;top:9.95px;width:13.38px;height:13.38px;background:#fff;background-image:repeating-linear-gradient(0deg,rgba(20,20,20,.85) 0,rgba(20,20,20,.85) .9px,rgba(0,0,0,0) .9px,rgba(0,0,0,0) 1.9px),repeating-linear-gradient(90deg,rgba(20,20,20,.8) 0,rgba(20,20,20,.8) 1px,rgba(0,0,0,0) 1px,rgba(0,0,0,0) 2.1px);"></div><div class="a" style="left:81.74px;top:4.8px;width:19.98px;height:20.59px;background:radial-gradient(ellipse 50% 30% at 50% 60%,#8a8a88 0,rgba(138,138,136,0) 100%),radial-gradient(ellipse 40% 20% at 40% 30%,#5a6a78 0,rgba(90,106,120,0) 100%);"></div><div class="a" style="left:88.33px;top:4.39px;width:12.98px;height:3.5px;background:#3a4a8a;"></div><div class="a" style="left:8.64px;top:3.36px;width:7.21px;height:3.71px;background:#c83a3a;"></div><div class="a" style="left:8.02px;top:26.42px;width:93.91px;height:0.62px;background:#888;"></div><div class="a" style="left:8.64px;top:28.07px;width:92.67px;height:26.77px;background:#f7f7f5;border:.5px solid #bbb"></div><div class="a" style="left:48.8px;top:28.07px;width:12.35px;height:1.65px;background:#333;"></div><div class="a" style="left:11.32px;top:30.95px;width:87.93px;height:21.83px;background:repeating-linear-gradient(0deg,rgba(90,90,90,0.38) 0,rgba(90,90,90,0.38) 0.6px,rgba(90,90,90,0) 0.6px,rgba(90,90,90,0) 1.9px);"></div><div class="a" style="left:92.04px;top:38.78px;width:9.27px;height:16.06px;background:radial-gradient(ellipse 60% 50% at 60% 60%,rgba(120,120,120,.6),rgba(120,120,120,0));"></div><div class="a" style="left:8.64px;top:57.72px;width:22.65px;height:79.91px;background:repeating-linear-gradient(0deg,rgba(120,120,120,0.3) 0,rgba(120,120,120,0.3) 0.6px,rgba(120,120,120,0) 0.6px,rgba(120,120,120,0) 1.7px);"></div><div class="a" style="left:32.73px;top:57.72px;width:20.6px;height:79.91px;background:repeating-linear-gradient(0deg,rgba(120,120,120,0.3) 0,rgba(120,120,120,0.3) 0.6px,rgba(120,120,120,0) 0.6px,rgba(120,120,120,0) 1.7px);"></div><div class="a" style="left:55.39px;top:57.72px;width:40.36px;height:79.91px;background:repeating-linear-gradient(0deg,rgba(120,120,120,0.34) 0,rgba(120,120,120,0.34) 0.6px,rgba(120,120,120,0) 0.6px,rgba(120,120,120,0) 1.7px);"></div><div class="a" style="left:53.74px;top:56.28px;width:0.62px;height:81.35px;background:#999;"></div><div class="t " style="left:59.09px;top:57.72px;font-size:2.19px;color:#111;transform-origin:0 0;transform:scaleX(1.085);font-weight:900">伯先公学校报隆重推出第一期</div><div class="a" style="left:12.76px;top:72.76px;width:13.38px;height:9.68px;background:linear-gradient(90deg,#c8202a,#e8e0e0 50%,#3a3a4a);"></div><div class="a" style="left:35.41px;top:69.67px;width:15.86px;height:9.88px;background:linear-gradient(to bottom,#3a6ad8,#c83a3a 60%,#e8e8e8);"></div><div class="a" style="left:13.38px;top:90.88px;width:12.76px;height:9.68px;background:linear-gradient(90deg,#e84a6a,#f4f0f0 60%,#e84a6a);"></div><div class="a" style="left:37.47px;top:92.32px;width:13.39px;height:6.18px;background:#efe6c8;"></div><div class="a" style="left:13.38px;top:106.74px;width:12.76px;height:10.29px;background:linear-gradient(to bottom,#e87a9a,#f4e8e8 50%,#c83a5a);"></div><div class="a" style="left:35.41px;top:106.32px;width:15.86px;height:9.07px;background:linear-gradient(to bottom,#c8a878,#6a4a2a);"></div><div class="a" style="left:12.76px;top:125.68px;width:13.38px;height:10.3px;background:linear-gradient(to bottom,#c8d8c0,#c83a3a 60%,#4a6a3a);"></div><div class="a" style="left:35.41px;top:123.62px;width:15.86px;height:10.3px;background:radial-gradient(ellipse 40% 30% at 50% 50%,#e83a4a,#2a2a2a 100%);"></div><div class="a" style="left:56.21px;top:74.2px;width:18.94px;height:14.0px;background:linear-gradient(90deg,#2a2a2a 0,#c8202a 30%,#e8e8e8 50%,#2a2a2a 80%);"></div><div class="a" style="left:75.98px;top:74.2px;width:19.36px;height:14.0px;background:linear-gradient(90deg,#c8202a 0,#e8e0e0 30%,#2a2a2a 60%,#c8202a 100%);"></div><div class="a" style="left:56.21px;top:107.15px;width:19.36px;height:14.0px;background:linear-gradient(to bottom,#c8202a 0,#e84a3a 40%,#f0e8e8 55%,#4a2a2a 100%);"></div><div class="a" style="left:76.39px;top:107.15px;width:18.95px;height:14.0px;background:linear-gradient(90deg,#e8e0d8 0,#c8a090 40%,#6a3a2a 100%);"></div><div class="a" style="left:97.4px;top:56.28px;width:5.35px;height:82.38px;background:#a6d6cc;"></div><div class="a" style="left:99.04px;top:58.34px;width:2.06px;height:78.26px;background:repeating-linear-gradient(0deg,#1a3a34 0,#1a3a34 1.6px,rgba(0,0,0,0) 1.6px,rgba(0,0,0,0) 2.6px);"></div></div><div class="rbw"><div class="rb">多媒体</div></div><div class="lb" style="left:-5px;width:118px">伯先中学校报第一期</div></div>
</body></html>
